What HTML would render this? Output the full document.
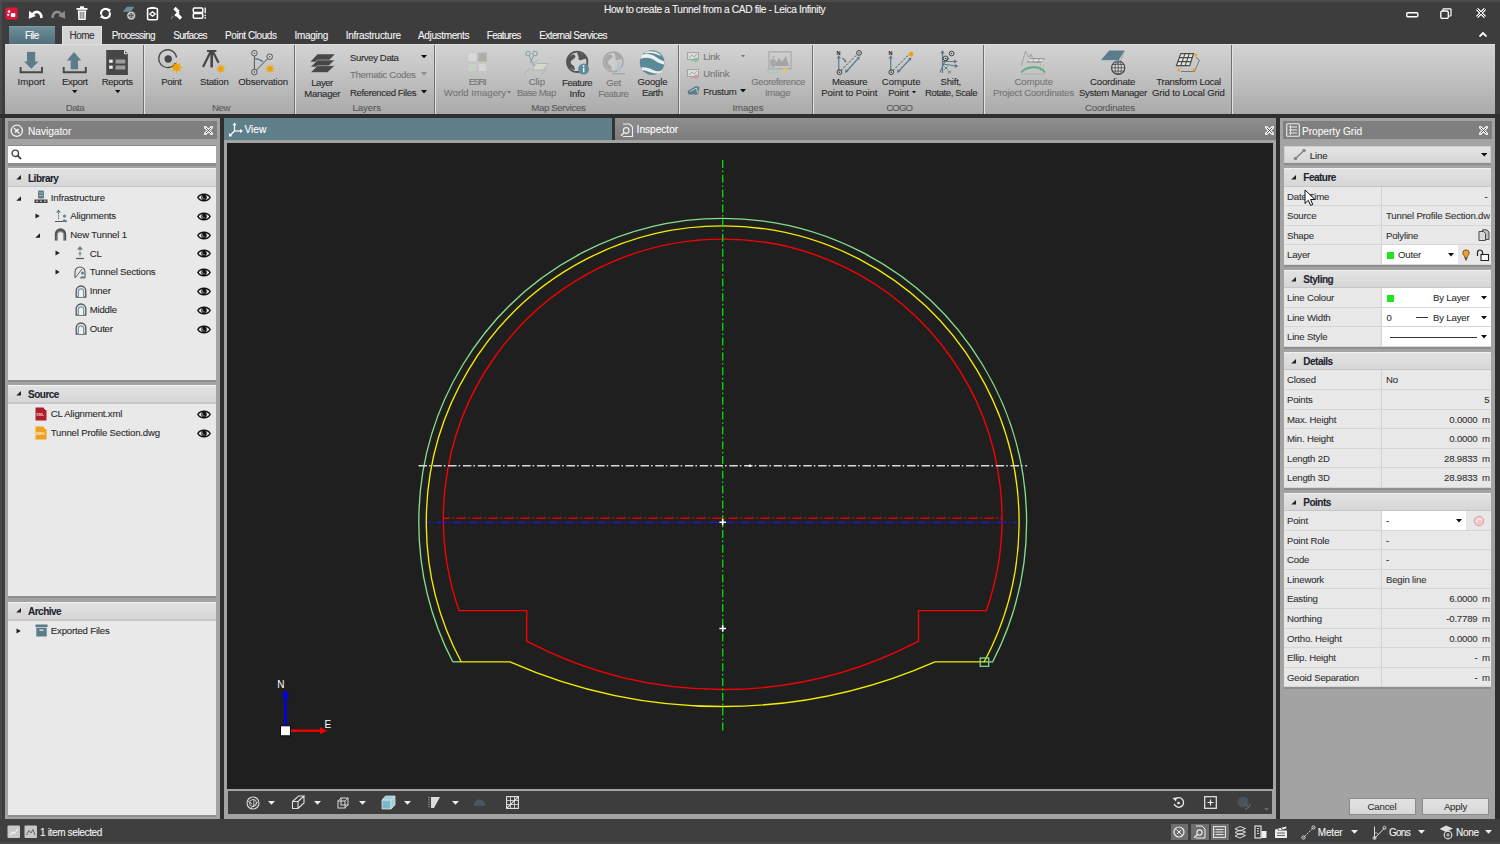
<!DOCTYPE html>
<html><head><meta charset="utf-8">
<style>
*{margin:0;padding:0;box-sizing:border-box}
html,body{width:1500px;height:844px;overflow:hidden;background:#3d3d3d;font-family:"Liberation Sans",sans-serif;font-size:9.6px;color:#333;position:relative}
.a{position:absolute;display:block}
.t{position:absolute;white-space:nowrap;-webkit-text-stroke:0.1px currentColor}
</style></head><body>

<div class="a" style="left:0px;top:0px;width:1500px;height:844px;background:#3d3d3d;"></div>
<div class="a" style="left:0px;top:0px;width:1500px;height:2px;background:#4a4a4a;"></div>
<div class="a" style="left:0px;top:0px;width:2px;height:844px;background:#4a4a4a;"></div>
<svg class="a" style="left:5px;top:7px;" width="13" height="13" viewBox="0 0 13 13"><rect x="0.5" y="0.5" width="12" height="12" rx="2" fill="#e3163a"/><circle cx="4" cy="4.5" r="1.3" fill="#fff"/><circle cx="3.2" cy="7.8" r="1.1" fill="#fff"/><rect x="5.8" y="6" width="4.5" height="4" rx="1" fill="#fff"/></svg>
<svg class="a" style="left:28px;top:7px;" width="15" height="13" viewBox="0 0 15 13"><path d="M4.5 7.5C7 4 11.5 3.8 13.2 8.5L13.5 11" stroke="#fff" stroke-width="2.6" fill="none"/><path d="M0.8 11.8L1.2 3.8L7.8 9Z" fill="#fff"/></svg>
<svg class="a" style="left:51px;top:7px;" width="15" height="13" viewBox="0 0 15 13"><path d="M10.5 7.5C8 4 3.5 3.8 1.8 8.5L1.5 11" stroke="#8c8c8c" stroke-width="2.6" fill="none"/><path d="M14.2 11.8L13.8 3.8L7.2 9Z" fill="#8c8c8c"/></svg>
<svg class="a" style="left:76px;top:6px;" width="12" height="15" viewBox="0 0 12 15"><rect x="0.5" y="2" width="11" height="1.8" fill="#fff"/><rect x="4" y="0.3" width="4" height="1.8" fill="#fff"/><path d="M1.8 4.6H10.2L9.7 14H2.3Z" fill="#fff"/><path d="M4.2 5.8V12.8M6 5.8V12.8M7.8 5.8V12.8" stroke="#555" stroke-width="0.9"/></svg>
<svg class="a" style="left:99px;top:7px;" width="13" height="13" viewBox="0 0 13 13"><path d="M2.3 7.5A4.3 4.3 0 0 1 9.8 3.6" stroke="#fff" stroke-width="2.1" fill="none"/><path d="M10.7 5.5A4.3 4.3 0 0 1 3.2 9.4" stroke="#fff" stroke-width="2.1" fill="none"/><path d="M7.6 1.2L11.8 2.2L10.3 6.2Z" fill="#fff"/><path d="M5.4 11.8L1.2 10.8L2.7 6.8Z" fill="#fff"/></svg>
<svg class="a" style="left:122px;top:6px;" width="15" height="15" viewBox="0 0 15 15"><path d="M0.8 5.8L4.8 0.8H12.5L8.5 5.8Z" fill="#6a8f9a"/><circle cx="9.2" cy="9.6" r="4.3" fill="#d8d8d8" stroke="#3d3d3d" stroke-width="0.6"/><path d="M6.5 9.6H12M9.2 7V12.2" stroke="#555" stroke-width="1"/><circle cx="9.2" cy="9.6" r="2.2" fill="none" stroke="#555" stroke-width="0.8"/></svg>
<svg class="a" style="left:146px;top:6px;" width="13" height="15" viewBox="0 0 13 15"><rect x="1.6" y="2.2" width="9.8" height="11.6" rx="1.3" fill="none" stroke="#fff" stroke-width="1.6"/><path d="M4 2.6C4 0.8 9 0.8 9 2.6" fill="#fff" stroke="#fff" stroke-width="1.2"/><path d="M3.8 8L6.5 5.8L9.2 8L6.5 10.2Z" fill="none" stroke="#fff" stroke-width="1.3"/></svg>
<svg class="a" style="left:169px;top:6px;" width="15" height="15" viewBox="0 0 15 15"><path d="M5.5 2L9.5 6M8 8.5L12 12.5" stroke="#fff" stroke-width="3.2"/><path d="M6.2 9.8L9.8 6.2" stroke="#fff" stroke-width="2.4"/><path d="M4.5 9.8L2 12.8" stroke="#6a8f9a" stroke-width="1.1"/></svg>
<svg class="a" style="left:192px;top:7px;" width="15" height="12" viewBox="0 0 15 12"><rect x="1.3" y="0.9" width="9.5" height="4.6" rx="1" fill="none" stroke="#fff" stroke-width="1.5"/><rect x="1.3" y="6.6" width="9.5" height="4.6" rx="1" fill="none" stroke="#fff" stroke-width="1.5"/><path d="M13.2 0.5V6.5" stroke="#fff" stroke-width="1.3"/><circle cx="13.2" cy="8.6" r="0.8" fill="#fff"/><circle cx="13.2" cy="10.9" r="0.8" fill="#fff"/></svg>
<div class="t" style="top:4.70px;font-size:10.2px;line-height:10.2px;color:#f2f2f2;letter-spacing:-0.382px;left:604.0px;">How to create a Tunnel from a CAD file - Leica Infinity</div>
<svg class="a" style="left:1406px;top:12px;" width="13" height="6" viewBox="0 0 13 6"><rect x="0.8" y="0.8" width="11" height="4" rx="1" fill="none" stroke="#fff" stroke-width="1.4"/></svg>
<svg class="a" style="left:1440px;top:8px;" width="12" height="11" viewBox="0 0 12 11"><rect x="0.8" y="3" width="7.5" height="7.5" rx="1.5" fill="none" stroke="#fff" stroke-width="1.3"/><path d="M3 3V1.2C3 1 3.2 0.8 3.5 0.8H10.5C10.8 0.8 11 1 11 1.3V7.5C11 7.8 10.8 8 10.5 8H8.3" fill="none" stroke="#fff" stroke-width="1.2"/></svg>
<svg class="a" style="left:1476px;top:8px;" width="10" height="10" viewBox="0 0 10 10"><path d="M1 1L9 9M9 1L1 9" stroke="#fff" stroke-width="3"/><path d="M1 1L9 9M9 1L1 9" stroke="#3d3d3d" stroke-width="1"/></svg>
<svg class="a" style="left:1479px;top:32px;" width="8" height="5" viewBox="0 0 8 5"><path d="M0.5 4.5L4 1L7.5 4.5" stroke="#fff" stroke-width="1.8" fill="none"/></svg>
<div class="a" style="left:9px;top:26px;width:46px;height:18px;background:linear-gradient(#6e8e99,#4f6f7b);border-top:1px solid #7d9ca6"></div>
<div class="t" style="top:30.80px;font-size:10px;line-height:10px;color:#fff;letter-spacing:-0.62px;left:25.0px;">File</div>
<div class="a" style="left:62px;top:26px;width:40px;height:19px;background:#d4d4d4;border:1px solid #e2e2e2;border-bottom:0"></div>
<div class="t" style="top:30.80px;font-size:10px;line-height:10px;color:#333;letter-spacing:-0.56px;left:69.5px;">Home</div>
<div class="t" style="top:30.80px;font-size:10px;line-height:10px;color:#f4f4f4;letter-spacing:-0.636px;left:111.75px;">Processing</div>
<div class="t" style="top:30.80px;font-size:10px;line-height:10px;color:#f4f4f4;letter-spacing:-0.744px;left:173.25px;">Surfaces</div>
<div class="t" style="top:30.80px;font-size:10px;line-height:10px;color:#f4f4f4;letter-spacing:-0.427px;left:225.0px;">Point Clouds</div>
<div class="t" style="top:30.80px;font-size:10px;line-height:10px;color:#f4f4f4;letter-spacing:-0.305px;left:294.5px;">Imaging</div>
<div class="t" style="top:30.80px;font-size:10px;line-height:10px;color:#f4f4f4;letter-spacing:-0.282px;left:345.75px;">Infrastructure</div>
<div class="t" style="top:30.80px;font-size:10px;line-height:10px;color:#f4f4f4;letter-spacing:-0.352px;left:418.0px;">Adjustments</div>
<div class="t" style="top:30.80px;font-size:10px;line-height:10px;color:#f4f4f4;letter-spacing:-0.709px;left:486.75px;">Features</div>
<div class="t" style="top:30.80px;font-size:10px;line-height:10px;color:#f4f4f4;letter-spacing:-0.598px;left:539.25px;">External Services</div>
<div class="a" style="left:5px;top:44px;width:1490px;height:70px;background:linear-gradient(#d2d2d2 0%,#c4c4c4 40%,#aaaaaa 100%);border-top:1px solid #dedede"></div>
<div class="a" style="left:144px;top:45px;width:1px;height:69px;background:#e4e4e4;"></div>
<div class="a" style="left:143px;top:45px;width:1px;height:69px;background:#707070;"></div>
<div class="a" style="left:295px;top:45px;width:1px;height:69px;background:#e4e4e4;"></div>
<div class="a" style="left:294px;top:45px;width:1px;height:69px;background:#707070;"></div>
<div class="a" style="left:435px;top:45px;width:1px;height:69px;background:#e4e4e4;"></div>
<div class="a" style="left:434px;top:45px;width:1px;height:69px;background:#707070;"></div>
<div class="a" style="left:679px;top:45px;width:1px;height:69px;background:#e4e4e4;"></div>
<div class="a" style="left:678px;top:45px;width:1px;height:69px;background:#707070;"></div>
<div class="a" style="left:812.5px;top:45px;width:1px;height:69px;background:#e4e4e4;"></div>
<div class="a" style="left:811.5px;top:45px;width:1px;height:69px;background:#707070;"></div>
<div class="a" style="left:984px;top:45px;width:1px;height:69px;background:#e4e4e4;"></div>
<div class="a" style="left:983px;top:45px;width:1px;height:69px;background:#707070;"></div>
<div class="a" style="left:1232px;top:45px;width:1px;height:69px;background:#e4e4e4;"></div>
<div class="a" style="left:1231px;top:45px;width:1px;height:69px;background:#707070;"></div>
<div class="t" style="top:77.20px;font-size:9.6px;line-height:9.6px;color:#2a2a2a;letter-spacing:0.059px;left:17.5px;">Import</div>
<div class="t" style="top:77.20px;font-size:9.6px;line-height:9.6px;color:#2a2a2a;letter-spacing:-0.349px;left:62.0px;">Export</div>
<svg class="a" style="left:72.25px;top:90.4px;" width="5.5" height="3.2" viewBox="0 0 5.5 3.2"><path d="M0 0H5.5L2.75 3.2Z" fill="#111"/></svg>
<div class="t" style="top:77.20px;font-size:9.6px;line-height:9.6px;color:#2a2a2a;letter-spacing:-0.393px;left:101.75px;">Reports</div>
<svg class="a" style="left:114.75px;top:90.4px;" width="5.5" height="3.2" viewBox="0 0 5.5 3.2"><path d="M0 0H5.5L2.75 3.2Z" fill="#111"/></svg>
<div class="t" style="top:103.00px;font-size:9.6px;line-height:9.6px;color:#585858;letter-spacing:-0.512px;left:65.75px;">Data</div>
<div class="t" style="top:77.20px;font-size:9.6px;line-height:9.6px;color:#2a2a2a;letter-spacing:-0.345px;left:161.25px;">Point</div>
<div class="t" style="top:77.20px;font-size:9.6px;line-height:9.6px;color:#2a2a2a;letter-spacing:-0.189px;left:200.0px;">Station</div>
<div class="t" style="top:77.20px;font-size:9.6px;line-height:9.6px;color:#2a2a2a;letter-spacing:-0.201px;left:238.25px;">Observation</div>
<div class="t" style="top:103.00px;font-size:9.6px;line-height:9.6px;color:#585858;letter-spacing:-0.364px;left:212.0px;">New</div>
<div class="t" style="top:78.40px;font-size:9.6px;line-height:9.6px;color:#2a2a2a;letter-spacing:-0.502px;left:311.25px;">Layer</div>
<div class="t" style="top:89.20px;font-size:9.6px;line-height:9.6px;color:#2a2a2a;letter-spacing:-0.274px;left:304.25px;">Manager</div>
<div class="t" style="top:52.50px;font-size:9.6px;line-height:9.6px;color:#2a2a2a;letter-spacing:-0.383px;left:350.0px;">Survey Data</div>
<svg class="a" style="left:420.5px;top:54.75px;" width="6" height="3.5" viewBox="0 0 6 3.5"><path d="M0 0H6L3.0 3.5Z" fill="#111"/></svg>
<div class="t" style="top:70.00px;font-size:9.6px;line-height:9.6px;color:#747474;letter-spacing:-0.315px;left:350.0px;">Thematic Codes</div>
<svg class="a" style="left:420.5px;top:72.25px;" width="6" height="3.5" viewBox="0 0 6 3.5"><path d="M0 0H6L3.0 3.5Z" fill="#8a8a8a"/></svg>
<div class="t" style="top:88.00px;font-size:9.6px;line-height:9.6px;color:#2a2a2a;letter-spacing:-0.404px;left:350.0px;">Referenced Files</div>
<svg class="a" style="left:420.5px;top:90.25px;" width="6" height="3.5" viewBox="0 0 6 3.5"><path d="M0 0H6L3.0 3.5Z" fill="#111"/></svg>
<div class="t" style="top:103.00px;font-size:9.6px;line-height:9.6px;color:#585858;letter-spacing:-0.062px;left:352.5px;">Layers</div>
<div class="t" style="top:77.20px;font-size:9.6px;line-height:9.6px;color:#747474;letter-spacing:-1.469px;left:468.75px;">ESRI</div>
<div class="t" style="top:88.00px;font-size:9.6px;line-height:9.6px;color:#747474;letter-spacing:0.001px;left:443.75px;">World Imagery</div>
<svg class="a" style="left:506.5px;top:91.25px;" width="4" height="2.5" viewBox="0 0 4 2.5"><path d="M0 0H4L2.0 2.5Z" fill="#747474"/></svg>
<div class="t" style="top:77.20px;font-size:9.6px;line-height:9.6px;color:#747474;letter-spacing:-0.097px;left:528.75px;">Clip</div>
<div class="t" style="top:88.00px;font-size:9.6px;line-height:9.6px;color:#747474;letter-spacing:-0.567px;left:517.0px;">Base Map</div>
<div class="t" style="top:78.20px;font-size:9.6px;line-height:9.6px;color:#2a2a2a;letter-spacing:-0.43px;left:562.0px;">Feature</div>
<div class="t" style="top:89.00px;font-size:9.6px;line-height:9.6px;color:#2a2a2a;letter-spacing:-0.171px;left:569.5px;">Info</div>
<div class="t" style="top:78.20px;font-size:9.6px;line-height:9.6px;color:#747474;letter-spacing:-0.238px;left:606.25px;">Get</div>
<div class="t" style="top:89.00px;font-size:9.6px;line-height:9.6px;color:#747474;letter-spacing:-0.43px;left:598.25px;">Feature</div>
<div class="t" style="top:77.20px;font-size:9.6px;line-height:9.6px;color:#2a2a2a;letter-spacing:-0.192px;left:637.5px;">Google</div>
<div class="t" style="top:88.00px;font-size:9.6px;line-height:9.6px;color:#2a2a2a;letter-spacing:-0.486px;left:642.0px;">Earth</div>
<div class="t" style="top:103.00px;font-size:9.6px;line-height:9.6px;color:#585858;letter-spacing:-0.332px;left:531.25px;">Map Services</div>
<div class="t" style="top:52.20px;font-size:9.6px;line-height:9.6px;color:#747474;letter-spacing:-0.292px;left:703.25px;">Link</div>
<svg class="a" style="left:740.5px;top:54.75px;" width="4" height="2.5" viewBox="0 0 4 2.5"><path d="M0 0H4L2.0 2.5Z" fill="#747474"/></svg>
<div class="t" style="top:69.20px;font-size:9.6px;line-height:9.6px;color:#747474;letter-spacing:-0.09px;left:703.25px;">Unlink</div>
<div class="t" style="top:86.70px;font-size:9.6px;line-height:9.6px;color:#2a2a2a;letter-spacing:-0.284px;left:703.25px;">Frustum</div>
<svg class="a" style="left:740.0px;top:88.75px;" width="6" height="3.5" viewBox="0 0 6 3.5"><path d="M0 0H6L3.0 3.5Z" fill="#111"/></svg>
<div class="t" style="top:77.20px;font-size:9.6px;line-height:9.6px;color:#747474;letter-spacing:-0.405px;left:751.25px;">Georeference</div>
<div class="t" style="top:88.00px;font-size:9.6px;line-height:9.6px;color:#747474;letter-spacing:-0.295px;left:765.0px;">Image</div>
<div class="t" style="top:103.00px;font-size:9.6px;line-height:9.6px;color:#585858;letter-spacing:-0.096px;left:732.5px;">Images</div>
<div class="t" style="top:77.20px;font-size:9.6px;line-height:9.6px;color:#2a2a2a;letter-spacing:-0.309px;left:832.0px;">Measure</div>
<div class="t" style="top:88.00px;font-size:9.6px;line-height:9.6px;color:#2a2a2a;letter-spacing:-0.065px;left:821.25px;">Point to Point</div>
<div class="t" style="top:77.20px;font-size:9.6px;line-height:9.6px;color:#2a2a2a;letter-spacing:-0.034px;left:881.75px;">Compute</div>
<div class="t" style="top:88.00px;font-size:9.6px;line-height:9.6px;color:#2a2a2a;letter-spacing:-0.282px;left:888.25px;">Point</div>
<svg class="a" style="left:911.5px;top:91.05px;" width="4" height="2.5" viewBox="0 0 4 2.5"><path d="M0 0H4L2.0 2.5Z" fill="#111"/></svg>
<div class="t" style="top:77.20px;font-size:9.6px;line-height:9.6px;color:#2a2a2a;letter-spacing:-0.226px;left:940.5px;">Shift,</div>
<div class="t" style="top:88.00px;font-size:9.6px;line-height:9.6px;color:#2a2a2a;letter-spacing:-0.427px;left:925.0px;">Rotate, Scale</div>
<div class="t" style="top:103.00px;font-size:9.6px;line-height:9.6px;color:#585858;letter-spacing:-0.863px;left:886.25px;">COGO</div>
<div class="t" style="top:77.20px;font-size:9.6px;line-height:9.6px;color:#747474;letter-spacing:-0.076px;left:1014.5px;">Compute</div>
<div class="t" style="top:88.00px;font-size:9.6px;line-height:9.6px;color:#747474;letter-spacing:-0.17px;left:993.0px;">Project Coordinates</div>
<div class="t" style="top:77.20px;font-size:9.6px;line-height:9.6px;color:#2a2a2a;letter-spacing:-0.174px;left:1090.0px;">Coordinate</div>
<div class="t" style="top:88.00px;font-size:9.6px;line-height:9.6px;color:#2a2a2a;letter-spacing:-0.336px;left:1079.0px;">System Manager</div>
<div class="t" style="top:77.20px;font-size:9.6px;line-height:9.6px;color:#2a2a2a;letter-spacing:-0.286px;left:1156.25px;">Transform Local</div>
<div class="t" style="top:88.00px;font-size:9.6px;line-height:9.6px;color:#2a2a2a;letter-spacing:-0.131px;left:1152.0px;">Grid to Local Grid</div>
<div class="t" style="top:103.00px;font-size:9.6px;line-height:9.6px;color:#585858;letter-spacing:-0.176px;left:1085.0px;">Coordinates</div>
<svg class="a" style="left:18px;top:50px;" width="26" height="25" viewBox="0 0 26 25"><rect x="9" y="1.9" width="8.2" height="10" fill="#5b7c88"/><path d="M6 11.5H20.6L13.2 18.8Z" fill="#5b7c88"/><path d="M2.6 17V22.3H24V17" fill="none" stroke="#474747" stroke-width="1.9"/></svg>
<svg class="a" style="left:62px;top:50px;" width="26" height="25" viewBox="0 0 26 25"><rect x="8.7" y="10" width="7.3" height="9.3" fill="#5b7c88"/><path d="M4.8 10.6H19.2L12 1.9Z" fill="#5b7c88"/><path d="M1.7 17V22.3H23.8V17" fill="none" stroke="#474747" stroke-width="1.9"/></svg>
<svg class="a" style="left:106px;top:50px;" width="22" height="25" viewBox="0 0 22 25"><path d="M0.2 0H18L21.9 4V24.9H0.2Z" fill="#474747"/><path d="M18.5 0.8V3.8H21.2" fill="none" stroke="#eee" stroke-width="1"/><rect x="3.2" y="9.6" width="3.5" height="3.2" fill="#eee"/><rect x="3.2" y="15.6" width="3.5" height="3.2" fill="#eee"/><rect x="9.5" y="9.5" width="9.8" height="4" fill="#9c9c9c"/><rect x="9.5" y="15.5" width="9.8" height="4" fill="#9c9c9c"/></svg>
<svg class="a" style="left:158px;top:49px;" width="26" height="27" viewBox="0 0 26 27"><path d="M17.5 14A8.9 8.9 0 1 1 18.5 8.5" fill="none" stroke="#474747" stroke-width="1.4"/><circle cx="10.2" cy="10" r="3.7" fill="#474747"/><polygon points="18.60,12.10 19.68,15.78 23.05,13.95 21.22,17.32 24.90,18.40 21.22,19.48 23.05,22.85 19.68,21.02 18.60,24.70 17.52,21.02 14.15,22.85 15.98,19.48 12.30,18.40 15.98,17.32 14.15,13.95 17.52,15.78" fill="#f0a000"/></svg>
<svg class="a" style="left:200px;top:49px;" width="28" height="27" viewBox="0 0 28 27"><rect x="7" y="1" width="9.4" height="2" fill="#474747"/><path d="M11.7 2.5V18.4" stroke="#474747" stroke-width="2.6"/><path d="M10.5 3L3 17.9" stroke="#474747" stroke-width="2.2"/><path d="M13 3L18.6 13.7" stroke="#474747" stroke-width="2.2"/><polygon points="20.80,14.80 21.66,17.72 24.34,16.26 22.88,18.94 25.80,19.80 22.88,20.66 24.34,23.34 21.66,21.88 20.80,24.80 19.94,21.88 17.26,23.34 18.72,20.66 15.80,19.80 18.72,18.94 17.26,16.26 19.94,17.72" fill="#f0a000"/></svg>
<svg class="a" style="left:248px;top:49px;" width="30" height="27" viewBox="0 0 30 27"><path d="M6.4 4.2V23.1M6.4 23.1L21.7 7.7" stroke="#555" stroke-width="1"/><path d="M6.4 9.5Q12 10 15 12.8" fill="none" stroke="#5b7c88" stroke-width="1.3"/><circle cx="6.4" cy="4.2" r="2.8" fill="#d0d0d0" stroke="#555" stroke-width="1"/><circle cx="6.4" cy="4.2" r="0.8" fill="#555"/><circle cx="21.7" cy="7.7" r="2.8" fill="#d0d0d0" stroke="#555" stroke-width="1"/><circle cx="21.7" cy="7.7" r="0.8" fill="#555"/><circle cx="6.4" cy="23.1" r="2.8" fill="#c8c8c8" stroke="#555" stroke-width="1"/><circle cx="6.4" cy="23.1" r="0.8" fill="#555"/><polygon points="22.00,14.80 22.86,17.72 25.54,16.26 24.08,18.94 27.00,19.80 24.08,20.66 25.54,23.34 22.86,21.88 22.00,24.80 21.14,21.88 18.46,23.34 19.92,20.66 17.00,19.80 19.92,18.94 18.46,16.26 21.14,17.72" fill="#f0a000"/></svg>
<svg class="a" style="left:310px;top:53px;" width="26" height="21" viewBox="0 0 26 21"><path d="M7.5 1.3H24.7L17.5 8.8H0.5Z" fill="#474747"/><path d="M7.5 7H24.7L17.5 14H0.5Z" fill="#474747" stroke="#c8c8c8" stroke-width="0.6"/><path d="M7.5 12.7H24.7L17.5 19.5H0.5Z" fill="#474747" stroke="#c4c4c4" stroke-width="0.6"/></svg>
<svg class="a" style="left:467px;top:52px;opacity:0.85" width="21" height="21" viewBox="0 0 21 21"><rect x="1" y="0.9" width="8.5" height="8.4" fill="#dcdcdc" stroke="#c4c4c4" stroke-width="0.6"/><rect x="11.2" y="0.9" width="8.5" height="8.4" fill="#a8aca0" stroke="#b0b0b0" stroke-width="0.6"/><rect x="1" y="11.2" width="8.5" height="8.4" fill="#c8d4c8" stroke="#c0c0c0" stroke-width="0.6"/><rect x="11.2" y="11.2" width="8.5" height="8.4" fill="#d8d8d8" stroke="#c0c0c0" stroke-width="0.6"/></svg>
<svg class="a" style="left:522px;top:49px;" width="28" height="27" viewBox="0 0 28 27"><circle cx="6" cy="4.5" r="2.2" fill="none" stroke="#8aa6ae" stroke-width="1.1"/><circle cx="13" cy="4.5" r="2.2" fill="none" stroke="#8aa6ae" stroke-width="1.1"/><path d="M7 6.5L12 17M12 6.5L8 14" stroke="#8aa6ae" stroke-width="1.1"/><path d="M10 21L14.5 14.5H26L21 21Z" fill="#d4dcc8" stroke="#aab4b4" stroke-width="0.9"/><path d="M2 25L8 19M20 25L25 19M11 15L17 10" stroke="#a8b0b0" stroke-width="0.9"/></svg>
<svg class="a" style="left:565px;top:50px;" width="26" height="26" viewBox="0 0 26 26"><circle cx="12.2" cy="11.8" r="10.2" fill="#cfcfcf" stroke="#555" stroke-width="1.8"/><path d="M3 8C5 5 8 4 9.5 4.5L10.5 7C9 9 7.5 9.5 6 11C5 13 7 15 9 16L10 20C7 20 3 17 2.5 13Z" fill="#555"/><path d="M12 2.5C16 2.5 20 5 21.5 8.5L17.5 9.5C15 11 13 10 13.5 8C14 6 12.5 5 12 2.5Z" fill="#555"/><circle cx="18.6" cy="19.1" r="5.5" fill="#5b8a9a"/><rect x="17.9" y="17.8" width="1.5" height="4.5" fill="#f4f4f4"/><circle cx="18.6" cy="16" r="0.9" fill="#f4f4f4"/></svg>
<svg class="a" style="left:602px;top:50px;" width="24" height="26" viewBox="0 0 24 26"><circle cx="11.2" cy="11.8" r="9.8" fill="#cdcdcd" stroke="#a8a8a8" stroke-width="1.6"/><path d="M3 8C5 5 8 4 9.5 4.5L10.5 7C9 9 7.5 9.5 6 11C5 13 7 15 9 16L10 20C7 20 3 17 2.5 13Z" fill="#a8a8a8"/><path d="M12 2.5C16 2.5 20 5 21 8.5L17 9.5C15 11 13 10 13.5 8C14 6 12.5 5 12 2.5Z" fill="#a8a8a8"/><rect x="15" y="11.5" width="3.4" height="6.5" fill="#b4c4ca"/><path d="M12.5 17.5H21L16.7 22Z" fill="#b4c4ca"/><path d="M10.5 23.8H23" stroke="#a4a4a4" stroke-width="1.4"/></svg>
<svg class="a" style="left:639px;top:49px;" width="27" height="27" viewBox="0 0 27 27"><circle cx="13.1" cy="13.5" r="12.3" fill="#5a8a98"/><path d="M2.5 6.5C7 4 13 5 17 8C20 10 23 12 25.3 12.5L25 15.5C21 15 18 13 15 11C11 8.5 6 8 1.5 10Z" fill="#eeeeee"/><path d="M6 3.2C10 1.5 16 2 20 4.5L22.5 7C19 6 16 4.5 12 4C10 3.8 8 4 6 4.5Z" fill="#eeeeee"/><path d="M2.5 18.5C6 18 10 19 14 21C17 22.5 21 23 23.5 21L22 23.5C19 25 15 24.5 12 23.5C8 22 5 21 3 21Z" fill="#eeeeee"/></svg>
<svg class="a" style="left:687px;top:52px;" width="13" height="10" viewBox="0 0 13 10"><rect x="0.5" y="0.5" width="11" height="7" fill="#dadada" stroke="#9a9a9a" stroke-width="0.8"/><path d="M2 6L5 3L7 5L10 2" stroke="#9a9a9a" stroke-width="0.8" fill="none"/><circle cx="9" cy="8" r="1.8" fill="none" stroke="#6cbf8a" stroke-width="1"/><circle cx="6.5" cy="9.5" r="1.8" fill="none" stroke="#6cbf8a" stroke-width="1"/></svg>
<svg class="a" style="left:687px;top:69px;" width="13" height="10" viewBox="0 0 13 10"><rect x="0.5" y="0.5" width="11" height="7" fill="#dadada" stroke="#9a9a9a" stroke-width="0.8"/><path d="M2 6L5 3L7 5L10 2" stroke="#9a9a9a" stroke-width="0.8" fill="none"/><circle cx="9" cy="8" r="1.8" fill="none" stroke="#d88a9a" stroke-width="1"/><circle cx="6.5" cy="9.5" r="1.8" fill="none" stroke="#d88a9a" stroke-width="1"/></svg>
<svg class="a" style="left:687px;top:85px;" width="13" height="10" viewBox="0 0 13 10"><path d="M0.5 6L9 1L12.5 2L11 9.5H1.5Z" fill="#5b7c88"/><path d="M3 6.5L9.5 3L10.5 8" stroke="#e0e0e0" stroke-width="0.8" fill="none"/></svg>
<svg class="a" style="left:765px;top:51px;" width="27" height="24" viewBox="0 0 27 24"><rect x="4" y="0.8" width="22" height="17" fill="none" stroke="#a8a8a8" stroke-width="1.2"/><path d="M9 15L14 7L17 11L21 5L24 15Z" fill="#a4a4a4"/><circle cx="8.5" cy="6" r="1.5" fill="#a8b8c0"/><path d="M5 11A3 3 0 0 1 11 11C11 14 8 17 8 17C8 17 5 14 5 11Z" fill="#a8a8a8"/><ellipse cx="8" cy="19.5" rx="6" ry="2.5" fill="none" stroke="#a8c0c0" stroke-width="1"/><polygon points="20.00,15.40 20.62,17.50 22.55,16.45 21.50,18.38 23.60,19.00 21.50,19.62 22.55,21.55 20.62,20.50 20.00,22.60 19.38,20.50 17.45,21.55 18.50,19.62 16.40,19.00 18.50,18.38 17.45,16.45 19.38,17.50" fill="#e8c070"/></svg>
<svg class="a" style="left:834px;top:49px;" width="28" height="27" viewBox="0 0 28 27"><text x="2.5" y="5.5" font-size="5.5" font-weight="bold" fill="#222" font-family="Liberation Sans">N</text><path d="M4.8 22V8" stroke="#5b7c88" stroke-width="1.2"/><path d="M2.6 9.5L4.8 6L7 9.5Z" fill="#5b7c88"/><path d="M8.5 9L11.5 12" stroke="#5b7c88" stroke-width="1.4"/><path d="M10 13L12.5 13.5L12 11Z" fill="#5b7c88"/><path d="M7 21.5L23 5.5" stroke="#444" stroke-width="1" stroke-dasharray="2.2 1.6"/><path d="M12.5 22.5L24.5 9" stroke="#5b7c88" stroke-width="1.2"/><path d="M11 24L11.5 20L14.5 22.5Z" fill="#5b7c88"/><path d="M26 7.5L22.5 8.5L25.3 11Z" fill="#5b7c88"/><circle cx="5.4" cy="23.2" r="2.4" fill="none" stroke="#333" stroke-width="0.9"/><circle cx="5.4" cy="23.2" r="0.7" fill="#333"/><circle cx="25" cy="3.9" r="2.4" fill="none" stroke="#333" stroke-width="0.9"/><circle cx="25" cy="3.9" r="0.7" fill="#333"/></svg>
<svg class="a" style="left:886px;top:49px;" width="28" height="27" viewBox="0 0 28 27"><text x="2.5" y="5.5" font-size="5.5" font-weight="bold" fill="#222" font-family="Liberation Sans">N</text><path d="M4.7 22V8" stroke="#5b7c88" stroke-width="1.2"/><path d="M2.5 9.5L4.7 6L6.9 9.5Z" fill="#5b7c88"/><path d="M7 21.5L23 5.5" stroke="#444" stroke-width="1" stroke-dasharray="2.2 1.6"/><path d="M12.5 22.5L24 10" stroke="#5b7c88" stroke-width="1.2"/><path d="M11 24L11.5 20L14.5 22.5Z" fill="#5b7c88"/><path d="M25.5 8.5L22 9.5L24.8 12Z" fill="#5b7c88"/><circle cx="5.3" cy="23.2" r="2.4" fill="none" stroke="#333" stroke-width="0.9"/><circle cx="5.3" cy="23.2" r="0.7" fill="#333"/><circle cx="25.1" cy="5.1" r="2.3" fill="#f0a000"/></svg>
<svg class="a" style="left:937px;top:49px;" width="28" height="27" viewBox="0 0 28 27"><path d="M5.5 24V3" stroke="#5b7c88" stroke-width="1.2"/><path d="M3.3 4.5L5.5 1L7.7 4.5Z" fill="#5b7c88"/><path d="M3 23.5L7.5 13L12 9" stroke="#5b7c88" stroke-width="1.1" fill="none"/><path d="M6 12.5H18M6 15L19 17" stroke="#5b7c88" stroke-width="1.1"/><path d="M17 10.5L20.5 12.5L17 14.5Z" fill="#5b7c88"/><path d="M18 15L21.5 17.2L17.5 19Z" fill="#5b7c88"/><path d="M7.5 17.5L10.5 20.5M10.5 17.5L7.5 20.5M11 21.5L14 24.5M14 21.5L11 24.5" stroke="#5b7c88" stroke-width="1"/><circle cx="8.6" cy="9.4" r="2.4" fill="none" stroke="#333" stroke-width="0.9"/><circle cx="8.6" cy="9.4" r="0.7" fill="#333"/><circle cx="14.6" cy="4.5" r="2.4" fill="none" stroke="#333" stroke-width="0.9"/><circle cx="14.6" cy="4.5" r="0.7" fill="#333"/></svg>
<svg class="a" style="left:1020px;top:49px;" width="28" height="27" viewBox="0 0 28 27"><path d="M1.3 17L5.5 2L9 8.5L11 5L12.5 9.5" fill="none" stroke="#9c9c9c" stroke-width="0.9"/><path d="M6.4 13.5L10.2 9H25.4L21 14Z" fill="#9a9a9a"/><path d="M9.5 10.2H13.8L12.3 12.2H8ZM14.8 10.2H19L17.5 12.2H13.3ZM20 10.2H23.5L22 12.2H18.5Z" fill="#e8e8e8"/><path d="M20.5 15V22M23.5 15V21" stroke="#a4a4a4" stroke-width="0.8" stroke-dasharray="1 1"/><path d="M1.3 23.5C6 17 20 16 25 23.5" fill="none" stroke="#5cb080" stroke-width="1.8"/><path d="M1 25H25.5" stroke="#b0b0b0" stroke-width="1"/></svg>
<svg class="a" style="left:1099px;top:49px;" width="28" height="27" viewBox="0 0 28 27"><path d="M2 11L10.3 1.4H25.5L19.8 11Z" fill="#5b7c88"/><path d="M2 11H19.8L17 13H4Z" fill="#b8c4c8"/><path d="M25.5 1.4L21 14" stroke="#8aa0a8" stroke-width="0.8"/><circle cx="19.2" cy="18.8" r="6.6" fill="#dcdcdc" stroke="#444" stroke-width="1.2"/><path d="M12.6 18.8H25.8M19.2 12.2V25.4M13.5 15.5H24.9M13.5 22.1H24.9" stroke="#444" stroke-width="0.8"/><ellipse cx="19.2" cy="18.8" rx="3.2" ry="6.6" fill="none" stroke="#444" stroke-width="0.8"/><path d="M16.5 12L19 17L21.5 12Z" fill="#5b7c88"/></svg>
<svg class="a" style="left:1174px;top:51px;" width="28" height="24" viewBox="0 0 28 24"><path d="M6.8 2.6H19.5L15.7 14.6H2.4Z" fill="#e6e6e6" stroke="#4a4a4a" stroke-width="1.2"/><path d="M11 2.6L6.8 14.6M15.3 2.6L11.2 14.6M5.4 6.6H18.2M4 10.6H16.9" stroke="#4a4a4a" stroke-width="1.1"/><path d="M22 6.5L25.5 9L20.5 20.5H7" fill="none" stroke="#777" stroke-width="1"/><path d="M20 2.5L23.5 3.5L21.5 6.5Z" fill="#f0a000"/><path d="M4 17L3.5 20.5L7 19.5Z" fill="#f0a000"/><path d="M19 17L22.5 19L19 20.5Z" fill="#f0a000"/></svg>
<div class="a" style="left:5px;top:118px;width:215px;height:701px;background:#a3a3a3;"></div>
<div class="a" style="left:8px;top:121px;width:209px;height:18px;background:#7f7f7f;"></div>
<svg class="a" style="left:10px;top:124px;" width="14" height="14" viewBox="0 0 14 14"><circle cx="6.8" cy="6.8" r="5.6" fill="none" stroke="#f0f0f0" stroke-width="1.3"/><path d="M4 4L9.5 9.5M5 8.5L8.5 5" stroke="#f0f0f0" stroke-width="1.1"/><circle cx="6.8" cy="6.8" r="1.5" fill="#f0f0f0"/></svg>
<div class="t" style="top:126.60px;font-size:10.2px;line-height:10.2px;color:#f8f8f8;letter-spacing:-0.04px;left:28px;">Navigator</div>
<svg class="a" style="left:204px;top:125.5px;" width="9" height="9" viewBox="0 0 9 9"><path d="M1.3 1.3L7.7 7.7M7.7 1.3L1.3 7.7" stroke="#fafafa" stroke-width="2.8" stroke-linecap="round"/><path d="M1.6 1.6L7.4 7.4M7.4 1.6L1.6 7.4" stroke="#333" stroke-width="0.8"/></svg>
<div class="a" style="left:8px;top:145px;width:208px;height:18.5px;background:#ffffff;border-top:1px solid #8a8a8a;border-bottom:1px solid #8e8e8e"></div>
<svg class="a" style="left:11px;top:149px;" width="11" height="11" viewBox="0 0 11 11"><circle cx="4.3" cy="4.3" r="3.2" fill="none" stroke="#444" stroke-width="1.4"/><path d="M6.6 6.6L10 10" stroke="#444" stroke-width="1.8"/></svg>
<div class="a" style="left:8px;top:168px;width:208px;height:211.5px;background:#e9e9e9;"></div>
<div class="a" style="left:8px;top:168px;width:208px;height:17.5px;background:linear-gradient(#e2e2e2,#d6d6d6);border-top:1px solid #f2f2f2"></div>
<div class="a" style="left:8px;top:185.5px;width:208px;height:1.5px;background:#c6c6c6;"></div>
<svg class="a" style="left:16px;top:174.5px;" width="6" height="5" viewBox="0 0 6 5"><path d="M5 0V4.5H0.2Z" fill="#222"/></svg>
<div class="t" style="top:173.80px;font-size:10px;line-height:10px;color:#1e2430;letter-spacing:-0.5px;font-weight:bold;left:28px;">Library</div>
<div class="a" style="left:8px;top:384.5px;width:208px;height:211.0px;background:#e9e9e9;"></div>
<div class="a" style="left:8px;top:384.5px;width:208px;height:17.5px;background:linear-gradient(#e2e2e2,#d6d6d6);border-top:1px solid #f2f2f2"></div>
<div class="a" style="left:8px;top:402.0px;width:208px;height:1.5px;background:#c6c6c6;"></div>
<svg class="a" style="left:16px;top:391.0px;" width="6" height="5" viewBox="0 0 6 5"><path d="M5 0V4.5H0.2Z" fill="#222"/></svg>
<div class="t" style="top:390.30px;font-size:10px;line-height:10px;color:#1e2430;letter-spacing:-0.5px;font-weight:bold;left:28px;">Source</div>
<div class="a" style="left:8px;top:601.5px;width:208px;height:213.5px;background:#e9e9e9;"></div>
<div class="a" style="left:8px;top:601.5px;width:208px;height:17.5px;background:linear-gradient(#e2e2e2,#d6d6d6);border-top:1px solid #f2f2f2"></div>
<div class="a" style="left:8px;top:619.0px;width:208px;height:1.5px;background:#c6c6c6;"></div>
<svg class="a" style="left:16px;top:608.0px;" width="6" height="5" viewBox="0 0 6 5"><path d="M5 0V4.5H0.2Z" fill="#222"/></svg>
<div class="t" style="top:607.30px;font-size:10px;line-height:10px;color:#1e2430;letter-spacing:-0.5px;font-weight:bold;left:28px;">Archive</div>
<div class="a" style="left:8px;top:379.5px;width:208px;height:2px;background:#8e8e8e;"></div>
<div class="a" style="left:8px;top:595.5px;width:208px;height:2px;background:#8e8e8e;"></div>
<div class="a" style="left:8px;top:815px;width:208px;height:2px;background:#8e8e8e;"></div>
<div class="a" style="left:8px;top:163.5px;width:208px;height:2px;background:#8e8e8e;"></div>
<svg class="a" style="left:16px;top:195.8px;" width="6" height="5" viewBox="0 0 6 5"><path d="M5 0.2V4.8H0.2Z" fill="#222"/></svg>
<svg class="a" style="left:34px;top:190.3px;" width="14" height="14" viewBox="0 0 14 14"><rect x="4" y="0.5" width="6" height="8" rx="1.2" fill="#5b7c88"/><path d="M5 3H9M5 5.5H9" stroke="#b8c8cc" stroke-width="0.8"/><rect x="0.5" y="9.5" width="13" height="3.5" fill="#444"/><path d="M2 11.2H4M6 11.2H8M10 11.2H12" stroke="#ddd" stroke-width="1"/></svg>
<div class="t" style="top:192.50px;font-size:9.6px;line-height:9.6px;color:#2a2a2a;letter-spacing:-0.18px;left:50.8px;">Infrastructure</div>
<svg class="a" style="left:197px;top:193.3px;" width="14" height="9" viewBox="0 0 14 9"><path d="M0.9 4.5C3 0.2 11 0.2 13.1 4.5C11 8.8 3 8.8 0.9 4.5Z" fill="none" stroke="#111" stroke-width="1.5"/><circle cx="7" cy="4.5" r="2.7" fill="#111"/><path d="M6.3 3A1.6 1.6 0 1 0 8.2 5.4A1.4 1.4 0 0 1 6.3 3Z" fill="#e8e8e8"/></svg>
<svg class="a" style="left:35px;top:213px;" width="5" height="6" viewBox="0 0 5 6"><path d="M0.5 0.5L4.8 3L0.5 5.5Z" fill="#222"/></svg>
<svg class="a" style="left:54px;top:209px;" width="14" height="14" viewBox="0 0 14 14"><path d="M2 3.5L4.5 0.5L7 3.5Z" fill="#5b7c88"/><path d="M4.5 4V11" stroke="#555" stroke-width="1" stroke-dasharray="1.3 1"/><path d="M1 12.5H8" stroke="#555" stroke-width="1"/><circle cx="10.5" cy="7" r="1.6" fill="#5b7c88"/><path d="M8 13C8 9.5 13 9.5 13 13Z" fill="#5b7c88"/></svg>
<div class="t" style="top:211.20px;font-size:9.6px;line-height:9.6px;color:#2a2a2a;letter-spacing:-0.18px;left:70.3px;">Alignments</div>
<svg class="a" style="left:197px;top:212px;" width="14" height="9" viewBox="0 0 14 9"><path d="M0.9 4.5C3 0.2 11 0.2 13.1 4.5C11 8.8 3 8.8 0.9 4.5Z" fill="none" stroke="#111" stroke-width="1.5"/><circle cx="7" cy="4.5" r="2.7" fill="#111"/><path d="M6.3 3A1.6 1.6 0 1 0 8.2 5.4A1.4 1.4 0 0 1 6.3 3Z" fill="#e8e8e8"/></svg>
<svg class="a" style="left:35px;top:233.1px;" width="6" height="5" viewBox="0 0 6 5"><path d="M5 0.2V4.8H0.2Z" fill="#222"/></svg>
<svg class="a" style="left:54px;top:228.1px;" width="13" height="13" viewBox="0 0 13 13"><path d="M0.8 12.5V6A5.7 5.7 0 0 1 12.2 6V12.5H9.3V6.8A2.8 2.8 0 0 0 3.7 6.8V12.5Z" fill="#555"/><path d="M3.2 12.5V6.8A3.3 3.3 0 0 1 9.8 6.8V12.5" fill="none" stroke="#a8a8a8" stroke-width="0.8"/></svg>
<div class="t" style="top:229.80px;font-size:9.6px;line-height:9.6px;color:#2a2a2a;letter-spacing:-0.18px;left:70.3px;">New Tunnel 1</div>
<svg class="a" style="left:197px;top:230.6px;" width="14" height="9" viewBox="0 0 14 9"><path d="M0.9 4.5C3 0.2 11 0.2 13.1 4.5C11 8.8 3 8.8 0.9 4.5Z" fill="none" stroke="#111" stroke-width="1.5"/><circle cx="7" cy="4.5" r="2.7" fill="#111"/><path d="M6.3 3A1.6 1.6 0 1 0 8.2 5.4A1.4 1.4 0 0 1 6.3 3Z" fill="#e8e8e8"/></svg>
<svg class="a" style="left:55px;top:250.4px;" width="5" height="6" viewBox="0 0 5 6"><path d="M0.5 0.5L4.8 3L0.5 5.5Z" fill="#222"/></svg>
<svg class="a" style="left:75px;top:246.4px;" width="10" height="14" viewBox="0 0 10 14"><path d="M2 3.5L5 0.3L8 3.5Z" fill="#5b7c88"/><path d="M5 3.5V11" stroke="#666" stroke-width="1" stroke-dasharray="1.4 1"/><path d="M3.5 7.5H6.5" stroke="#666" stroke-width="0.8"/><path d="M1 12.5H9" stroke="#555" stroke-width="1.2"/></svg>
<div class="t" style="top:248.60px;font-size:9.6px;line-height:9.6px;color:#2a2a2a;letter-spacing:-0.18px;left:89.7px;">CL</div>
<svg class="a" style="left:197px;top:249.4px;" width="14" height="9" viewBox="0 0 14 9"><path d="M0.9 4.5C3 0.2 11 0.2 13.1 4.5C11 8.8 3 8.8 0.9 4.5Z" fill="none" stroke="#111" stroke-width="1.5"/><circle cx="7" cy="4.5" r="2.7" fill="#111"/><path d="M6.3 3A1.6 1.6 0 1 0 8.2 5.4A1.4 1.4 0 0 1 6.3 3Z" fill="#e8e8e8"/></svg>
<svg class="a" style="left:55px;top:269.2px;" width="5" height="6" viewBox="0 0 5 6"><path d="M0.5 0.5L4.8 3L0.5 5.5Z" fill="#222"/></svg>
<svg class="a" style="left:74px;top:265.7px;" width="13" height="13" viewBox="0 0 13 13"><path d="M1 12V6A5 5 0 0 1 11 6V12" fill="none" stroke="#555" stroke-width="1.1"/><path d="M1.5 11.5L8 3" stroke="#555" stroke-width="0.9"/><circle cx="8.5" cy="7" r="1.5" fill="#5b7c88"/><path d="M6 12.5C6 9.5 11 9.5 11 12.5Z" fill="#5b7c88"/></svg>
<div class="t" style="top:267.40px;font-size:9.6px;line-height:9.6px;color:#2a2a2a;letter-spacing:-0.18px;left:89.7px;">Tunnel Sections</div>
<svg class="a" style="left:197px;top:268.2px;" width="14" height="9" viewBox="0 0 14 9"><path d="M0.9 4.5C3 0.2 11 0.2 13.1 4.5C11 8.8 3 8.8 0.9 4.5Z" fill="none" stroke="#111" stroke-width="1.5"/><circle cx="7" cy="4.5" r="2.7" fill="#111"/><path d="M6.3 3A1.6 1.6 0 1 0 8.2 5.4A1.4 1.4 0 0 1 6.3 3Z" fill="#e8e8e8"/></svg>
<svg class="a" style="left:74.5px;top:284.5px;" width="12" height="13" viewBox="0 0 12 13"><path d="M1.2 12.2V5.8A4.8 4.8 0 0 1 10.8 5.8V12.2Z" fill="#dfe6e8" stroke="#555" stroke-width="1.3"/><path d="M3.4 12V6.4A2.6 2.6 0 0 1 8.6 6.4V12" fill="#eef2f3" stroke="#7d9aa4" stroke-width="1.2"/></svg>
<div class="t" style="top:286.20px;font-size:9.6px;line-height:9.6px;color:#2a2a2a;letter-spacing:-0.18px;left:89.7px;">Inner</div>
<svg class="a" style="left:197px;top:287px;" width="14" height="9" viewBox="0 0 14 9"><path d="M0.9 4.5C3 0.2 11 0.2 13.1 4.5C11 8.8 3 8.8 0.9 4.5Z" fill="none" stroke="#111" stroke-width="1.5"/><circle cx="7" cy="4.5" r="2.7" fill="#111"/><path d="M6.3 3A1.6 1.6 0 1 0 8.2 5.4A1.4 1.4 0 0 1 6.3 3Z" fill="#e8e8e8"/></svg>
<svg class="a" style="left:74.5px;top:303.3px;" width="12" height="13" viewBox="0 0 12 13"><path d="M1.2 12.2V5.8A4.8 4.8 0 0 1 10.8 5.8V12.2Z" fill="#dfe6e8" stroke="#555" stroke-width="1.3"/><path d="M3.4 12V6.4A2.6 2.6 0 0 1 8.6 6.4V12" fill="#eef2f3" stroke="#7d9aa4" stroke-width="1.2"/></svg>
<div class="t" style="top:305.00px;font-size:9.6px;line-height:9.6px;color:#2a2a2a;letter-spacing:-0.18px;left:89.7px;">Middle</div>
<svg class="a" style="left:197px;top:305.8px;" width="14" height="9" viewBox="0 0 14 9"><path d="M0.9 4.5C3 0.2 11 0.2 13.1 4.5C11 8.8 3 8.8 0.9 4.5Z" fill="none" stroke="#111" stroke-width="1.5"/><circle cx="7" cy="4.5" r="2.7" fill="#111"/><path d="M6.3 3A1.6 1.6 0 1 0 8.2 5.4A1.4 1.4 0 0 1 6.3 3Z" fill="#e8e8e8"/></svg>
<svg class="a" style="left:74.5px;top:322.1px;" width="12" height="13" viewBox="0 0 12 13"><path d="M1.2 12.2V5.8A4.8 4.8 0 0 1 10.8 5.8V12.2Z" fill="#dfe6e8" stroke="#555" stroke-width="1.3"/><path d="M3.4 12V6.4A2.6 2.6 0 0 1 8.6 6.4V12" fill="#eef2f3" stroke="#7d9aa4" stroke-width="1.2"/></svg>
<div class="t" style="top:323.80px;font-size:9.6px;line-height:9.6px;color:#2a2a2a;letter-spacing:-0.18px;left:89.7px;">Outer</div>
<svg class="a" style="left:197px;top:324.6px;" width="14" height="9" viewBox="0 0 14 9"><path d="M0.9 4.5C3 0.2 11 0.2 13.1 4.5C11 8.8 3 8.8 0.9 4.5Z" fill="none" stroke="#111" stroke-width="1.5"/><circle cx="7" cy="4.5" r="2.7" fill="#111"/><path d="M6.3 3A1.6 1.6 0 1 0 8.2 5.4A1.4 1.4 0 0 1 6.3 3Z" fill="#e8e8e8"/></svg>
<svg class="a" style="left:35px;top:407px;" width="12" height="14" viewBox="0 0 12 14"><path d="M0.5 0.5H8.5L11.5 3.5V13.5H0.5Z" fill="#b0202a"/><path d="M8.8 0.8L11.2 3.2" stroke="#f0f0f0" stroke-width="1"/><text x="1.3" y="9.2" font-size="3.6" fill="#f4d0d0" font-family="Liberation Sans" font-weight="bold">XML</text></svg>
<div class="t" style="top:409.20px;font-size:9.6px;line-height:9.6px;color:#2a2a2a;letter-spacing:-0.18px;left:50.8px;">CL Alignment.xml</div>
<svg class="a" style="left:197px;top:410px;" width="14" height="9" viewBox="0 0 14 9"><path d="M0.9 4.5C3 0.2 11 0.2 13.1 4.5C11 8.8 3 8.8 0.9 4.5Z" fill="none" stroke="#111" stroke-width="1.5"/><circle cx="7" cy="4.5" r="2.7" fill="#111"/><path d="M6.3 3A1.6 1.6 0 1 0 8.2 5.4A1.4 1.4 0 0 1 6.3 3Z" fill="#e8e8e8"/></svg>
<svg class="a" style="left:35px;top:426px;" width="12" height="14" viewBox="0 0 12 14"><path d="M0.5 0.5H8.5L11.5 3.5V13.5H0.5Z" fill="#eea020"/><path d="M8.8 0.8L11.2 3.2" stroke="#fff" stroke-width="1"/><text x="0.9" y="9.2" font-size="3.6" fill="#fff4d8" font-family="Liberation Sans" font-weight="bold">DWG</text></svg>
<div class="t" style="top:428.00px;font-size:9.6px;line-height:9.6px;color:#2a2a2a;letter-spacing:-0.18px;left:50.8px;">Tunnel Profile Section.dwg</div>
<svg class="a" style="left:197px;top:428.8px;" width="14" height="9" viewBox="0 0 14 9"><path d="M0.9 4.5C3 0.2 11 0.2 13.1 4.5C11 8.8 3 8.8 0.9 4.5Z" fill="none" stroke="#111" stroke-width="1.5"/><circle cx="7" cy="4.5" r="2.7" fill="#111"/><path d="M6.3 3A1.6 1.6 0 1 0 8.2 5.4A1.4 1.4 0 0 1 6.3 3Z" fill="#e8e8e8"/></svg>
<svg class="a" style="left:16px;top:627.7px;" width="5" height="6" viewBox="0 0 5 6"><path d="M0.5 0.5L4.8 3L0.5 5.5Z" fill="#222"/></svg>
<svg class="a" style="left:35px;top:624px;" width="13" height="13" viewBox="0 0 13 13"><rect x="0.5" y="0.5" width="12" height="2.8" fill="#5b7c88"/><rect x="1.3" y="4" width="10.4" height="8.5" fill="#5b7c88"/><rect x="4.5" y="5.5" width="4" height="1.3" fill="#dfe8ea"/></svg>
<div class="t" style="top:625.90px;font-size:9.6px;line-height:9.6px;color:#2a2a2a;letter-spacing:-0.18px;left:50.8px;">Exported Files</div>
<div class="a" style="left:220px;top:118px;width:4px;height:701px;background:#2f2f2f;"></div>
<div class="a" style="left:1276px;top:118px;width:4px;height:701px;background:#2f2f2f;"></div>
<div class="a" style="left:1495px;top:118px;width:5px;height:701px;background:#2f2f2f;"></div>
<div class="a" style="left:0px;top:114px;width:1500px;height:4px;background:#2f2f2f;"></div>
<div class="a" style="left:224px;top:118px;width:1052px;height:701px;background:#a3a3a3;"></div>
<div class="a" style="left:224px;top:118px;width:388px;height:22px;background:#5f7f8a;"></div>
<div class="a" style="left:612px;top:118px;width:3px;height:22px;background:#333;"></div>
<div class="a" style="left:615px;top:118px;width:661px;height:22px;background:linear-gradient(#8e8e8e,#7c7c7c);"></div>
<svg class="a" style="left:228px;top:122px;" width="16" height="15" viewBox="0 0 16 15"><path d="M6.5 9V2" stroke="#fff" stroke-width="1.2"/><path d="M4.5 3.3L6.5 0.5L8.5 3.3Z" fill="#fff"/><path d="M6.5 9H13" stroke="#fff" stroke-width="1.2"/><path d="M12 7L15 9L12 11Z" fill="#fff"/><path d="M6.5 9L2 13.5" stroke="#fff" stroke-width="1.2"/><path d="M1 11L1 14.5L4.2 14.2Z" fill="#fff"/></svg>
<div class="t" style="top:124.70px;font-size:10.2px;line-height:10.2px;color:#fff;letter-spacing:-0.04px;left:244.5px;">View</div>
<svg class="a" style="left:620px;top:123px;" width="14" height="15" viewBox="0 0 14 15"><path d="M3 1H9.5L12.5 4V13.5H3" fill="none" stroke="#eee" stroke-width="1.1"/><circle cx="6.2" cy="7.5" r="2.8" fill="none" stroke="#eee" stroke-width="1.2"/><path d="M4.2 9.5L1 12.8" stroke="#eee" stroke-width="1.4"/></svg>
<div class="t" style="top:124.70px;font-size:10.2px;line-height:10.2px;color:#fff;letter-spacing:-0.04px;left:636.6px;">Inspector</div>
<svg class="a" style="left:1265px;top:125.5px;" width="9" height="9" viewBox="0 0 9 9"><path d="M1.3 1.3L7.7 7.7M7.7 1.3L1.3 7.7" stroke="#fafafa" stroke-width="2.8" stroke-linecap="round"/><path d="M1.6 1.6L7.4 7.4M7.4 1.6L1.6 7.4" stroke="#333" stroke-width="0.8"/></svg>
<div class="a" style="left:227px;top:143px;width:1046px;height:646px;background:#1f1f1f;"></div>
<div class="a" style="left:228px;top:791px;width:1044px;height:23px;background:#3d3d3d;"></div>
<svg class="a" style="left:0;top:0" width="1500" height="844" viewBox="0 0 1500 844"><defs><clipPath id="vp"><rect x="227" y="143" width="1046" height="646"/></clipPath></defs><g clip-path="url(#vp)"><path d="M452.71 661.8 A303.9 303.9 0 1 1 992.69 661.8 L984.22 661.8" fill="none" stroke="#84de8c" stroke-width="1.35"/><path d="M452.71 661.8 L461.18 661.8" fill="none" stroke="#84de8c" stroke-width="1.35"/><path d="M461.18 661.8 A296.4 296.4 0 1 1 984.22 661.8 L934.9 661.8 A527.3 527.3 0 0 1 510 661.8 Z" fill="none" stroke="#f2ee00" stroke-width="1.35"/><path d="M459.06 610.6 A279.3 279.3 0 1 1 986.34 610.6 L918.5 610.6 L918.5 641.2 A421.1 421.1 0 0 1 526.7 641.2 L526.7 610.6 Z" fill="none" stroke="#f80000" stroke-width="1.35"/><path d="M418.5 465.7H1027.1" stroke="#d8d8d8" stroke-width="1.6" stroke-dasharray="8.5 2 1.6 2.7"/><circle cx="750" cy="465.7" r="1.3" fill="#fff"/><path d="M443.4 518.2H1001.6" stroke="#e00000" stroke-width="1.4" stroke-dasharray="9.5 2.5 1.5 2.5" stroke-dashoffset="3"/><path d="M427 522.4H1017" stroke="#1818e8" stroke-width="1.4" stroke-dasharray="9.5 2.5 1.5 2.5" stroke-dashoffset="6"/><path d="M722.7 160V732" stroke="#00d800" stroke-width="1.4" stroke-dasharray="8 2.6 1.6 2.6"/><path d="M719.4000000000001 522.3H726.0M722.7 519.0V525.5999999999999" stroke="#fff" stroke-width="1.5"/><path d="M719.4000000000001 628.5H726.0M722.7 625.2V631.8" stroke="#fff" stroke-width="1.5"/><rect x="980.2" y="658" width="8.5" height="8.3" fill="none" stroke="#80d890" stroke-width="1.3"/><path d="M285.4 726V694" stroke="#0000f0" stroke-width="2.4"/><path d="M281.8 697L285.4 689.5L289 697Z" fill="#0000f0"/><path d="M291 730.7H322" stroke="#f00000" stroke-width="2.4"/><path d="M320 727.2L327.5 730.7L320 734.2Z" fill="#f00000"/><rect x="280.5" y="725.8" width="10" height="10" fill="#fff" stroke="#000" stroke-width="1"/><text x="277.3" y="688" font-size="10" fill="#fff" font-family="Liberation Sans">N</text><text x="324.5" y="727.5" font-size="10" fill="#fff" font-family="Liberation Sans">E</text></g></svg>
<svg class="a" style="left:246px;top:796px;" width="14" height="14" viewBox="0 0 14 14"><circle cx="7" cy="7" r="6" fill="none" stroke="#ddd" stroke-width="1.1"/><circle cx="7" cy="7" r="3.5" fill="none" stroke="#ddd" stroke-width="0.9"/><path d="M2 5L6 8M8 3L7.5 11M5 12L12 6" stroke="#ddd" stroke-width="0.8"/></svg>
<svg class="a" style="left:268.1px;top:800.7px;" width="7" height="4" viewBox="0 0 7 4"><path d="M0 0H7L3.5 3.8Z" fill="#f0f0f0"/></svg>
<svg class="a" style="left:291px;top:795px;" width="15" height="15" viewBox="0 0 15 15"><path d="M1.5 6.5H7V13.5H1.5Z M1.5 6.5L7.5 1H13L7 6.5M13 1V8L7 13.5" fill="none" stroke="#ddd" stroke-width="1.1"/></svg>
<svg class="a" style="left:313.5px;top:800.7px;" width="7" height="4" viewBox="0 0 7 4"><path d="M0 0H7L3.5 3.8Z" fill="#f0f0f0"/></svg>
<svg class="a" style="left:337px;top:797px;" width="13" height="12" viewBox="0 0 13 12"><rect x="1" y="4" width="7" height="7" fill="none" stroke="#ddd" stroke-width="1"/><rect x="4" y="1" width="7" height="7" fill="none" stroke="#ddd" stroke-width="1"/><path d="M1 4L4 1M8 4L11 1M8 11L11 8" stroke="#ddd" stroke-width="0.8"/></svg>
<svg class="a" style="left:359.1px;top:800.7px;" width="7" height="4" viewBox="0 0 7 4"><path d="M0 0H7L3.5 3.8Z" fill="#f0f0f0"/></svg>
<svg class="a" style="left:381px;top:795px;" width="15" height="15" viewBox="0 0 15 15"><path d="M1 5H10V14H1Z" fill="#7ab8cc" stroke="#ddd" stroke-width="0.8"/><path d="M1 5L4.5 1H14L10 5ZM10 5L14 1V10L10 14Z" fill="#9ccfe0" stroke="#ddd" stroke-width="0.8"/></svg>
<svg class="a" style="left:404.1px;top:800.7px;" width="7" height="4" viewBox="0 0 7 4"><path d="M0 0H7L3.5 3.8Z" fill="#f0f0f0"/></svg>
<svg class="a" style="left:428px;top:796px;" width="13" height="13" viewBox="0 0 13 13"><path d="M3 1H12L6 12H3Z" fill="#ddd"/><path d="M1 1V12" stroke="#ddd" stroke-width="0.9" stroke-dasharray="1 1.3"/></svg>
<svg class="a" style="left:451.7px;top:800.7px;" width="7" height="4" viewBox="0 0 7 4"><path d="M0 0H7L3.5 3.8Z" fill="#f0f0f0"/></svg>
<svg class="a" style="left:472px;top:797px;" width="15" height="10" viewBox="0 0 15 10"><path d="M1.5 9C2 4 4.5 2.5 7.5 2.5C10.5 2.5 13 4 13.5 9Z" fill="#4a5560"/></svg>
<svg class="a" style="left:506px;top:796px;" width="13" height="13" viewBox="0 0 13 13"><rect x="0.6" y="0.6" width="11.8" height="11.8" fill="none" stroke="#e6e6e6" stroke-width="1.1"/><path d="M4.5 0.6V12.4M8.5 0.6V12.4M0.6 4.5H12.4M0.6 8.5H12.4" stroke="#e6e6e6" stroke-width="0.8"/><path d="M0.6 12.4L12.4 0.6" stroke="#e6e6e6" stroke-width="1.2"/></svg>
<svg class="a" style="left:1172px;top:796px;" width="13" height="13" viewBox="0 0 13 13"><path d="M3 3.5A4.8 4.8 0 1 1 2.2 8" fill="none" stroke="#eee" stroke-width="1.3"/><path d="M0.5 2L4.5 1.5L4 5.5Z" fill="#eee"/><circle cx="6.5" cy="7" r="1.3" fill="#eee"/></svg>
<svg class="a" style="left:1204px;top:796px;" width="13" height="13" viewBox="0 0 13 13"><rect x="0.7" y="0.7" width="11.6" height="11.6" fill="none" stroke="#eee" stroke-width="1.2"/><path d="M6.5 3.5V9.5M3.5 6.5H9.5" stroke="#eee" stroke-width="1.2"/></svg>
<svg class="a" style="left:1236px;top:795px;" width="16" height="16" viewBox="0 0 16 16"><circle cx="7" cy="7" r="5.5" fill="#47525a"/><path d="M9 14A5 5 0 0 0 14 9" stroke="#5a6670" stroke-width="1.3" fill="none"/><path d="M8 9A4 4 0 0 1 12 13" stroke="#5a6670" stroke-width="1.1" fill="none"/></svg>
<svg class="a" style="left:1264px;top:808px;" width="5" height="3" viewBox="0 0 5 3"><path d="M0 0H5L2.5 3Z" fill="#666"/></svg>
<div class="a" style="left:1280px;top:118px;width:215px;height:701px;background:#a3a3a3;"></div>
<div class="a" style="left:1283px;top:121px;width:209px;height:18px;background:#7f7f7f;"></div>
<svg class="a" style="left:1286px;top:123px;" width="14" height="14" viewBox="0 0 14 14"><rect x="0.7" y="0.7" width="12.6" height="12.6" rx="1" fill="none" stroke="#eee" stroke-width="1.1"/><path d="M3 4H11M3 7H11M3 10H11" stroke="#eee" stroke-width="1"/><path d="M4.5 2V12" stroke="#eee" stroke-width="0.8"/></svg>
<div class="t" style="top:126.60px;font-size:10.2px;line-height:10.2px;color:#f8f8f8;letter-spacing:-0.04px;left:1302px;">Property Grid</div>
<svg class="a" style="left:1479px;top:125.5px;" width="9" height="9" viewBox="0 0 9 9"><path d="M1.3 1.3L7.7 7.7M7.7 1.3L1.3 7.7" stroke="#fafafa" stroke-width="2.8" stroke-linecap="round"/><path d="M1.6 1.6L7.4 7.4M7.4 1.6L1.6 7.4" stroke="#333" stroke-width="0.8"/></svg>
<div class="a" style="left:1283.5px;top:146px;width:207.5px;height:17px;background:linear-gradient(#e4e4e4,#d8d8d8);border:1px solid #cfcfcf"></div>
<div class="a" style="left:1283.5px;top:163px;width:207.5px;height:2px;background:#8e8e8e;"></div>
<svg class="a" style="left:1293px;top:148px;" width="14" height="13" viewBox="0 0 14 13"><path d="M2.5 10.5L11 2.5" stroke="#777" stroke-width="1.1"/><circle cx="2.5" cy="10.5" r="1.8" fill="#888"/><circle cx="11" cy="2.5" r="1.8" fill="#888"/></svg>
<div class="t" style="top:151.20px;font-size:9.6px;line-height:9.6px;color:#2a2a2a;letter-spacing:-0.15px;left:1309.8px;">Line</div>
<svg class="a" style="left:1480.75px;top:153.25px;" width="6.5" height="3.5" viewBox="0 0 6.5 3.5"><path d="M0 0H6.5L3.25 3.5Z" fill="#111"/></svg>
<div class="a" style="left:1283.5px;top:168px;width:207.5px;height:18.6px;background:linear-gradient(#e2e2e2,#d6d6d6);border-top:1px solid #f0f0f0"></div>
<div class="a" style="left:1283.5px;top:185.6px;width:207.5px;height:1px;background:#c4c4cc;"></div>
<svg class="a" style="left:1291px;top:175px;" width="6" height="5" viewBox="0 0 6 5"><path d="M5 0V4.5H0.2Z" fill="#222"/></svg>
<div class="t" style="top:173.40px;font-size:10px;line-height:10px;color:#1e2430;letter-spacing:-0.5px;font-weight:bold;left:1303.3px;">Feature</div>
<div class="a" style="left:1283.5px;top:186.6px;width:97.5px;height:19.55px;background:#e8e8e8;"></div>
<div class="a" style="left:1382px;top:186.6px;width:109px;height:19.55px;background:#e8e8e8;"></div>
<div class="a" style="left:1381px;top:186.6px;width:1px;height:19.55px;background:#d2d2d2;"></div>
<div class="a" style="left:1283.5px;top:205.15px;width:207.5px;height:1px;background:#d6d6d6;"></div>
<div class="t" style="top:191.57px;font-size:9.6px;line-height:9.6px;color:#333;letter-spacing:-0.18px;left:1287px;">Date Time</div>
<div class="t" style="top:191.57px;font-size:9.6px;line-height:9.6px;color:#333;letter-spacing:0px;right:12.200000000000045px;">-</div>
<div class="a" style="left:1283.5px;top:206.15px;width:97.5px;height:19.55px;background:#e8e8e8;"></div>
<div class="a" style="left:1382px;top:206.15px;width:109px;height:19.55px;background:#e8e8e8;"></div>
<div class="a" style="left:1381px;top:206.15px;width:1px;height:19.55px;background:#d2d2d2;"></div>
<div class="a" style="left:1283.5px;top:224.70000000000002px;width:207.5px;height:1px;background:#d6d6d6;"></div>
<div class="t" style="top:211.12px;font-size:9.6px;line-height:9.6px;color:#333;letter-spacing:-0.18px;left:1287px;">Source</div>
<div class="t" style="top:211.12px;font-size:9.6px;line-height:9.6px;color:#333;letter-spacing:-0.18px;left:1386px;width:104px;overflow:hidden;">Tunnel Profile Section.dwg</div>
<div class="a" style="left:1283.5px;top:225.70000000000002px;width:97.5px;height:19.55px;background:#e8e8e8;"></div>
<div class="a" style="left:1382px;top:225.70000000000002px;width:109px;height:19.55px;background:#e8e8e8;"></div>
<div class="a" style="left:1381px;top:225.70000000000002px;width:1px;height:19.55px;background:#d2d2d2;"></div>
<div class="a" style="left:1283.5px;top:244.25000000000003px;width:207.5px;height:1px;background:#d6d6d6;"></div>
<div class="t" style="top:230.68px;font-size:9.6px;line-height:9.6px;color:#333;letter-spacing:-0.18px;left:1287px;">Shape</div>
<div class="t" style="top:230.68px;font-size:9.6px;line-height:9.6px;color:#333;letter-spacing:-0.18px;left:1386px;">Polyline</div>
<svg class="a" style="left:1478px;top:229.47500000000002px;" width="12" height="12" viewBox="0 0 12 12"><path d="M4.5 0.8H8.8L11 3V10.5H4.5Z" fill="#bdbdbd" stroke="#4a4a4a" stroke-width="1"/><path d="M1 2.5H5.5L7.5 4.5V11.5H1Z" fill="#d8d8d8" stroke="#4a4a4a" stroke-width="1"/></svg>
<div class="a" style="left:1283.5px;top:245.25000000000003px;width:97.5px;height:19.55px;background:#e8e8e8;"></div>
<div class="a" style="left:1382px;top:245.25000000000003px;width:109px;height:19.55px;background:#e8e8e8;"></div>
<div class="a" style="left:1382px;top:245.25000000000003px;width:76.20000000000005px;height:19.55px;background:#ffffff;"></div>
<div class="a" style="left:1381px;top:245.25000000000003px;width:1px;height:19.55px;background:#d2d2d2;"></div>
<div class="a" style="left:1283.5px;top:263.8px;width:207.5px;height:1px;background:#d6d6d6;"></div>
<div class="t" style="top:250.23px;font-size:9.6px;line-height:9.6px;color:#333;letter-spacing:-0.18px;left:1287px;">Layer</div>
<div class="a" style="left:1386.6px;top:251.52500000000003px;width:7px;height:7px;background:#1ee61e;"></div>
<div class="t" style="top:250.23px;font-size:9.6px;line-height:9.6px;color:#333;letter-spacing:-0.18px;left:1398px;">Outer</div>
<svg class="a" style="left:1448.0px;top:253.27500000000003px;" width="6" height="3.5" viewBox="0 0 6 3.5"><path d="M0 0H6L3.0 3.5Z" fill="#111"/></svg>
<svg class="a" style="left:1462px;top:249.02500000000003px;" width="8" height="12" viewBox="0 0 8 12"><path d="M4 0.8A3.2 3.2 0 0 1 7.2 4C7.2 5.8 5.5 6.5 5.3 8.5H2.7C2.5 6.5 0.8 5.8 0.8 4A3.2 3.2 0 0 1 4 0.8Z" fill="#f0a020" stroke="#333" stroke-width="0.7"/><path d="M2.8 9.5H5.2M3 10.8H5" stroke="#333" stroke-width="0.9"/></svg>
<svg class="a" style="left:1476px;top:249.02500000000003px;" width="14" height="12" viewBox="0 0 14 12"><path d="M1.5 7V3.5A2.5 2.5 0 0 1 6.5 3.5V5" fill="none" stroke="#222" stroke-width="1.2"/><rect x="5" y="5.5" width="7.5" height="6" fill="#fff" stroke="#222" stroke-width="1.1"/></svg>
<div class="a" style="left:1283.5px;top:264.8px;width:207.5px;height:2px;background:#8e8e8e;"></div>
<div class="a" style="left:1283.5px;top:269.7px;width:207.5px;height:18.6px;background:linear-gradient(#e2e2e2,#d6d6d6);border-top:1px solid #f0f0f0"></div>
<div class="a" style="left:1283.5px;top:287.3px;width:207.5px;height:1px;background:#c4c4cc;"></div>
<svg class="a" style="left:1291px;top:276.7px;" width="6" height="5" viewBox="0 0 6 5"><path d="M5 0V4.5H0.2Z" fill="#222"/></svg>
<div class="t" style="top:275.10px;font-size:10px;line-height:10px;color:#1e2430;letter-spacing:-0.5px;font-weight:bold;left:1303.3px;">Styling</div>
<div class="a" style="left:1283.5px;top:288.3px;width:97.5px;height:19.55px;background:#e8e8e8;"></div>
<div class="a" style="left:1382px;top:288.3px;width:109px;height:19.55px;background:#ffffff;"></div>
<div class="a" style="left:1381px;top:288.3px;width:1px;height:19.55px;background:#d2d2d2;"></div>
<div class="a" style="left:1283.5px;top:306.85px;width:207.5px;height:1px;background:#d6d6d6;"></div>
<div class="t" style="top:293.27px;font-size:9.6px;line-height:9.6px;color:#333;letter-spacing:-0.18px;left:1287px;">Line Colour</div>
<div class="a" style="left:1386.6px;top:294.575px;width:7px;height:7px;background:#1ee61e;"></div>
<div class="t" style="top:293.27px;font-size:9.6px;line-height:9.6px;color:#333;letter-spacing:-0.18px;left:1433px;">By Layer</div>
<svg class="a" style="left:1481.0px;top:296.325px;" width="6" height="3.5" viewBox="0 0 6 3.5"><path d="M0 0H6L3.0 3.5Z" fill="#111"/></svg>
<div class="a" style="left:1283.5px;top:307.85px;width:97.5px;height:19.55px;background:#e8e8e8;"></div>
<div class="a" style="left:1382px;top:307.85px;width:109px;height:19.55px;background:#ffffff;"></div>
<div class="a" style="left:1381px;top:307.85px;width:1px;height:19.55px;background:#d2d2d2;"></div>
<div class="a" style="left:1283.5px;top:326.40000000000003px;width:207.5px;height:1px;background:#d6d6d6;"></div>
<div class="t" style="top:312.82px;font-size:9.6px;line-height:9.6px;color:#333;letter-spacing:-0.18px;left:1287px;">Line Width</div>
<div class="t" style="top:312.82px;font-size:9.6px;line-height:9.6px;color:#333;letter-spacing:-0.18px;left:1386.6px;">0</div>
<div class="a" style="left:1415.5px;top:317.125px;width:12px;height:1.2px;background:#333;"></div>
<div class="t" style="top:312.82px;font-size:9.6px;line-height:9.6px;color:#333;letter-spacing:-0.18px;left:1433px;">By Layer</div>
<svg class="a" style="left:1481.0px;top:315.875px;" width="6" height="3.5" viewBox="0 0 6 3.5"><path d="M0 0H6L3.0 3.5Z" fill="#111"/></svg>
<div class="a" style="left:1283.5px;top:327.40000000000003px;width:97.5px;height:19.55px;background:#e8e8e8;"></div>
<div class="a" style="left:1382px;top:327.40000000000003px;width:109px;height:19.55px;background:#ffffff;"></div>
<div class="a" style="left:1381px;top:327.40000000000003px;width:1px;height:19.55px;background:#d2d2d2;"></div>
<div class="a" style="left:1283.5px;top:345.95000000000005px;width:207.5px;height:1px;background:#d6d6d6;"></div>
<div class="t" style="top:332.38px;font-size:9.6px;line-height:9.6px;color:#333;letter-spacing:-0.18px;left:1287px;">Line Style</div>
<div class="a" style="left:1390.3px;top:336.675px;width:86.5px;height:1.2px;background:#333;"></div>
<svg class="a" style="left:1481.0px;top:335.425px;" width="6" height="3.5" viewBox="0 0 6 3.5"><path d="M0 0H6L3.0 3.5Z" fill="#111"/></svg>
<div class="a" style="left:1283.5px;top:346.95000000000005px;width:207.5px;height:2px;background:#8e8e8e;"></div>
<div class="a" style="left:1283.5px;top:351.85px;width:207.5px;height:18.6px;background:linear-gradient(#e2e2e2,#d6d6d6);border-top:1px solid #f0f0f0"></div>
<div class="a" style="left:1283.5px;top:369.45000000000005px;width:207.5px;height:1px;background:#c4c4cc;"></div>
<svg class="a" style="left:1291px;top:358.85px;" width="6" height="5" viewBox="0 0 6 5"><path d="M5 0V4.5H0.2Z" fill="#222"/></svg>
<div class="t" style="top:357.25px;font-size:10px;line-height:10px;color:#1e2430;letter-spacing:-0.5px;font-weight:bold;left:1303.3px;">Details</div>
<div class="a" style="left:1283.5px;top:370.45000000000005px;width:97.5px;height:19.55px;background:#e8e8e8;"></div>
<div class="a" style="left:1382px;top:370.45000000000005px;width:109px;height:19.55px;background:#e8e8e8;"></div>
<div class="a" style="left:1381px;top:370.45000000000005px;width:1px;height:19.55px;background:#d2d2d2;"></div>
<div class="a" style="left:1283.5px;top:389.00000000000006px;width:207.5px;height:1px;background:#d6d6d6;"></div>
<div class="t" style="top:375.43px;font-size:9.6px;line-height:9.6px;color:#333;letter-spacing:-0.18px;left:1287px;">Closed</div>
<div class="t" style="top:375.43px;font-size:9.6px;line-height:9.6px;color:#333;letter-spacing:-0.18px;left:1386px;">No</div>
<div class="a" style="left:1283.5px;top:390.00000000000006px;width:97.5px;height:19.55px;background:#e8e8e8;"></div>
<div class="a" style="left:1382px;top:390.00000000000006px;width:109px;height:19.55px;background:#e8e8e8;"></div>
<div class="a" style="left:1381px;top:390.00000000000006px;width:1px;height:19.55px;background:#d2d2d2;"></div>
<div class="a" style="left:1283.5px;top:408.55000000000007px;width:207.5px;height:1px;background:#d6d6d6;"></div>
<div class="t" style="top:394.98px;font-size:9.6px;line-height:9.6px;color:#333;letter-spacing:-0.18px;left:1287px;">Points</div>
<div class="t" style="top:394.98px;font-size:9.6px;line-height:9.6px;color:#333;letter-spacing:-0.18px;right:10.5px;">5</div>
<div class="a" style="left:1283.5px;top:409.55000000000007px;width:97.5px;height:19.55px;background:#e8e8e8;"></div>
<div class="a" style="left:1382px;top:409.55000000000007px;width:109px;height:19.55px;background:#e8e8e8;"></div>
<div class="a" style="left:1381px;top:409.55000000000007px;width:1px;height:19.55px;background:#d2d2d2;"></div>
<div class="a" style="left:1283.5px;top:428.1000000000001px;width:207.5px;height:1px;background:#d6d6d6;"></div>
<div class="t" style="top:414.53px;font-size:9.6px;line-height:9.6px;color:#333;letter-spacing:-0.18px;left:1287px;">Max. Height</div>
<div class="t" style="top:414.53px;font-size:9.6px;line-height:9.6px;color:#333;letter-spacing:-0.18px;right:22.5px;">0.0000</div>
<div class="t" style="top:414.53px;font-size:9.6px;line-height:9.6px;color:#333;letter-spacing:-0.18px;left:1482px;">m</div>
<div class="a" style="left:1283.5px;top:429.1000000000001px;width:97.5px;height:19.55px;background:#e8e8e8;"></div>
<div class="a" style="left:1382px;top:429.1000000000001px;width:109px;height:19.55px;background:#e8e8e8;"></div>
<div class="a" style="left:1381px;top:429.1000000000001px;width:1px;height:19.55px;background:#d2d2d2;"></div>
<div class="a" style="left:1283.5px;top:447.6500000000001px;width:207.5px;height:1px;background:#d6d6d6;"></div>
<div class="t" style="top:434.08px;font-size:9.6px;line-height:9.6px;color:#333;letter-spacing:-0.18px;left:1287px;">Min. Height</div>
<div class="t" style="top:434.08px;font-size:9.6px;line-height:9.6px;color:#333;letter-spacing:-0.18px;right:22.5px;">0.0000</div>
<div class="t" style="top:434.08px;font-size:9.6px;line-height:9.6px;color:#333;letter-spacing:-0.18px;left:1482px;">m</div>
<div class="a" style="left:1283.5px;top:448.6500000000001px;width:97.5px;height:19.55px;background:#e8e8e8;"></div>
<div class="a" style="left:1382px;top:448.6500000000001px;width:109px;height:19.55px;background:#e8e8e8;"></div>
<div class="a" style="left:1381px;top:448.6500000000001px;width:1px;height:19.55px;background:#d2d2d2;"></div>
<div class="a" style="left:1283.5px;top:467.2000000000001px;width:207.5px;height:1px;background:#d6d6d6;"></div>
<div class="t" style="top:453.63px;font-size:9.6px;line-height:9.6px;color:#333;letter-spacing:-0.18px;left:1287px;">Length 2D</div>
<div class="t" style="top:453.63px;font-size:9.6px;line-height:9.6px;color:#333;letter-spacing:-0.18px;right:22.5px;">28.9833</div>
<div class="t" style="top:453.63px;font-size:9.6px;line-height:9.6px;color:#333;letter-spacing:-0.18px;left:1482px;">m</div>
<div class="a" style="left:1283.5px;top:468.2000000000001px;width:97.5px;height:19.55px;background:#e8e8e8;"></div>
<div class="a" style="left:1382px;top:468.2000000000001px;width:109px;height:19.55px;background:#e8e8e8;"></div>
<div class="a" style="left:1381px;top:468.2000000000001px;width:1px;height:19.55px;background:#d2d2d2;"></div>
<div class="a" style="left:1283.5px;top:486.7500000000001px;width:207.5px;height:1px;background:#d6d6d6;"></div>
<div class="t" style="top:473.18px;font-size:9.6px;line-height:9.6px;color:#333;letter-spacing:-0.18px;left:1287px;">Length 3D</div>
<div class="t" style="top:473.18px;font-size:9.6px;line-height:9.6px;color:#333;letter-spacing:-0.18px;right:22.5px;">28.9833</div>
<div class="t" style="top:473.18px;font-size:9.6px;line-height:9.6px;color:#333;letter-spacing:-0.18px;left:1482px;">m</div>
<div class="a" style="left:1283.5px;top:487.75000000000006px;width:207.5px;height:2px;background:#8e8e8e;"></div>
<div class="a" style="left:1283.5px;top:492.65000000000003px;width:207.5px;height:18.6px;background:linear-gradient(#e2e2e2,#d6d6d6);border-top:1px solid #f0f0f0"></div>
<div class="a" style="left:1283.5px;top:510.25000000000006px;width:207.5px;height:1px;background:#c4c4cc;"></div>
<svg class="a" style="left:1291px;top:499.65000000000003px;" width="6" height="5" viewBox="0 0 6 5"><path d="M5 0V4.5H0.2Z" fill="#222"/></svg>
<div class="t" style="top:498.05px;font-size:10px;line-height:10px;color:#1e2430;letter-spacing:-0.5px;font-weight:bold;left:1303.3px;">Points</div>
<div class="a" style="left:1283.5px;top:511.25000000000006px;width:97.5px;height:19.55px;background:#e8e8e8;"></div>
<div class="a" style="left:1382px;top:511.25000000000006px;width:109px;height:19.55px;background:#e8e8e8;"></div>
<div class="a" style="left:1382px;top:511.25000000000006px;width:84.20000000000005px;height:19.55px;background:#ffffff;"></div>
<div class="a" style="left:1381px;top:511.25000000000006px;width:1px;height:19.55px;background:#d2d2d2;"></div>
<div class="a" style="left:1283.5px;top:529.8000000000001px;width:207.5px;height:1px;background:#d6d6d6;"></div>
<div class="t" style="top:516.23px;font-size:9.6px;line-height:9.6px;color:#333;letter-spacing:-0.18px;left:1287px;">Point</div>
<div class="t" style="top:516.23px;font-size:9.6px;line-height:9.6px;color:#333;letter-spacing:-0.18px;left:1386px;">-</div>
<svg class="a" style="left:1456.0px;top:519.2750000000001px;" width="6" height="3.5" viewBox="0 0 6 3.5"><path d="M0 0H6L3.0 3.5Z" fill="#111"/></svg>
<svg class="a" style="left:1473px;top:515.0250000000001px;" width="12" height="12" viewBox="0 0 12 12"><circle cx="6" cy="6" r="4.8" fill="#f2c8cc" stroke="#e2a2a8" stroke-width="1"/><path d="M3.5 7A2.8 2.8 0 0 1 8.5 5" fill="none" stroke="#fff" stroke-width="1"/></svg>
<div class="a" style="left:1283.5px;top:530.8000000000001px;width:97.5px;height:19.55px;background:#e8e8e8;"></div>
<div class="a" style="left:1382px;top:530.8000000000001px;width:109px;height:19.55px;background:#e8e8e8;"></div>
<div class="a" style="left:1381px;top:530.8000000000001px;width:1px;height:19.55px;background:#d2d2d2;"></div>
<div class="a" style="left:1283.5px;top:549.35px;width:207.5px;height:1px;background:#d6d6d6;"></div>
<div class="t" style="top:535.78px;font-size:9.6px;line-height:9.6px;color:#333;letter-spacing:-0.18px;left:1287px;">Point Role</div>
<div class="t" style="top:535.78px;font-size:9.6px;line-height:9.6px;color:#333;letter-spacing:-0.18px;left:1386px;">-</div>
<div class="a" style="left:1283.5px;top:550.35px;width:97.5px;height:19.55px;background:#e8e8e8;"></div>
<div class="a" style="left:1382px;top:550.35px;width:109px;height:19.55px;background:#e8e8e8;"></div>
<div class="a" style="left:1381px;top:550.35px;width:1px;height:19.55px;background:#d2d2d2;"></div>
<div class="a" style="left:1283.5px;top:568.9px;width:207.5px;height:1px;background:#d6d6d6;"></div>
<div class="t" style="top:555.33px;font-size:9.6px;line-height:9.6px;color:#333;letter-spacing:-0.18px;left:1287px;">Code</div>
<div class="t" style="top:555.33px;font-size:9.6px;line-height:9.6px;color:#333;letter-spacing:-0.18px;left:1386px;">-</div>
<div class="a" style="left:1283.5px;top:569.9px;width:97.5px;height:19.55px;background:#e8e8e8;"></div>
<div class="a" style="left:1382px;top:569.9px;width:109px;height:19.55px;background:#e8e8e8;"></div>
<div class="a" style="left:1381px;top:569.9px;width:1px;height:19.55px;background:#d2d2d2;"></div>
<div class="a" style="left:1283.5px;top:588.4499999999999px;width:207.5px;height:1px;background:#d6d6d6;"></div>
<div class="t" style="top:574.88px;font-size:9.6px;line-height:9.6px;color:#333;letter-spacing:-0.18px;left:1287px;">Linework</div>
<div class="t" style="top:574.88px;font-size:9.6px;line-height:9.6px;color:#333;letter-spacing:-0.18px;left:1386px;">Begin line</div>
<div class="a" style="left:1283.5px;top:589.4499999999999px;width:97.5px;height:19.55px;background:#e8e8e8;"></div>
<div class="a" style="left:1382px;top:589.4499999999999px;width:109px;height:19.55px;background:#e8e8e8;"></div>
<div class="a" style="left:1381px;top:589.4499999999999px;width:1px;height:19.55px;background:#d2d2d2;"></div>
<div class="a" style="left:1283.5px;top:607.9999999999999px;width:207.5px;height:1px;background:#d6d6d6;"></div>
<div class="t" style="top:594.42px;font-size:9.6px;line-height:9.6px;color:#333;letter-spacing:-0.18px;left:1287px;">Easting</div>
<div class="t" style="top:594.42px;font-size:9.6px;line-height:9.6px;color:#333;letter-spacing:-0.18px;right:22.5px;">6.0000</div>
<div class="t" style="top:594.42px;font-size:9.6px;line-height:9.6px;color:#333;letter-spacing:-0.18px;left:1482px;">m</div>
<div class="a" style="left:1283.5px;top:608.9999999999999px;width:97.5px;height:19.55px;background:#e8e8e8;"></div>
<div class="a" style="left:1382px;top:608.9999999999999px;width:109px;height:19.55px;background:#e8e8e8;"></div>
<div class="a" style="left:1381px;top:608.9999999999999px;width:1px;height:19.55px;background:#d2d2d2;"></div>
<div class="a" style="left:1283.5px;top:627.5499999999998px;width:207.5px;height:1px;background:#d6d6d6;"></div>
<div class="t" style="top:613.97px;font-size:9.6px;line-height:9.6px;color:#333;letter-spacing:-0.18px;left:1287px;">Northing</div>
<div class="t" style="top:613.97px;font-size:9.6px;line-height:9.6px;color:#333;letter-spacing:-0.18px;right:22.5px;">-0.7789</div>
<div class="t" style="top:613.97px;font-size:9.6px;line-height:9.6px;color:#333;letter-spacing:-0.18px;left:1482px;">m</div>
<div class="a" style="left:1283.5px;top:628.5499999999998px;width:97.5px;height:19.55px;background:#e8e8e8;"></div>
<div class="a" style="left:1382px;top:628.5499999999998px;width:109px;height:19.55px;background:#e8e8e8;"></div>
<div class="a" style="left:1381px;top:628.5499999999998px;width:1px;height:19.55px;background:#d2d2d2;"></div>
<div class="a" style="left:1283.5px;top:647.0999999999998px;width:207.5px;height:1px;background:#d6d6d6;"></div>
<div class="t" style="top:633.52px;font-size:9.6px;line-height:9.6px;color:#333;letter-spacing:-0.18px;left:1287px;">Ortho. Height</div>
<div class="t" style="top:633.52px;font-size:9.6px;line-height:9.6px;color:#333;letter-spacing:-0.18px;right:22.5px;">0.0000</div>
<div class="t" style="top:633.52px;font-size:9.6px;line-height:9.6px;color:#333;letter-spacing:-0.18px;left:1482px;">m</div>
<div class="a" style="left:1283.5px;top:648.0999999999998px;width:97.5px;height:19.55px;background:#e8e8e8;"></div>
<div class="a" style="left:1382px;top:648.0999999999998px;width:109px;height:19.55px;background:#e8e8e8;"></div>
<div class="a" style="left:1381px;top:648.0999999999998px;width:1px;height:19.55px;background:#d2d2d2;"></div>
<div class="a" style="left:1283.5px;top:666.6499999999997px;width:207.5px;height:1px;background:#d6d6d6;"></div>
<div class="t" style="top:653.07px;font-size:9.6px;line-height:9.6px;color:#333;letter-spacing:-0.18px;left:1287px;">Ellip. Height</div>
<div class="t" style="top:653.07px;font-size:9.6px;line-height:9.6px;color:#333;letter-spacing:-0.18px;right:22.5px;">-</div>
<div class="t" style="top:653.07px;font-size:9.6px;line-height:9.6px;color:#333;letter-spacing:-0.18px;left:1482px;">m</div>
<div class="a" style="left:1283.5px;top:667.6499999999997px;width:97.5px;height:19.55px;background:#e8e8e8;"></div>
<div class="a" style="left:1382px;top:667.6499999999997px;width:109px;height:19.55px;background:#e8e8e8;"></div>
<div class="a" style="left:1381px;top:667.6499999999997px;width:1px;height:19.55px;background:#d2d2d2;"></div>
<div class="a" style="left:1283.5px;top:686.1999999999997px;width:207.5px;height:1px;background:#d6d6d6;"></div>
<div class="t" style="top:672.62px;font-size:9.6px;line-height:9.6px;color:#333;letter-spacing:-0.18px;left:1287px;">Geoid Separation</div>
<div class="t" style="top:672.62px;font-size:9.6px;line-height:9.6px;color:#333;letter-spacing:-0.18px;right:22.5px;">-</div>
<div class="t" style="top:672.62px;font-size:9.6px;line-height:9.6px;color:#333;letter-spacing:-0.18px;left:1482px;">m</div>
<div class="a" style="left:1283.5px;top:687.2px;width:207.5px;height:2px;background:#8e8e8e;"></div>
<div class="a" style="left:1348.5px;top:797.7px;width:67px;height:17.7px;background:linear-gradient(#e2e2e2,#d8d8d8);border:1px solid #8a8a8a"></div>
<div class="t" style="top:802.20px;font-size:9.6px;line-height:9.6px;color:#333;letter-spacing:-0.15px;left:1232px;width:300px;text-align:center;">Cancel</div>
<div class="a" style="left:1422px;top:797.7px;width:66.5px;height:17.7px;background:linear-gradient(#e2e2e2,#d8d8d8);border:1px solid #8a8a8a"></div>
<div class="t" style="top:802.20px;font-size:9.6px;line-height:9.6px;color:#333;letter-spacing:-0.15px;left:1305.5px;width:300px;text-align:center;">Apply</div>
<div class="a" style="left:0px;top:819px;width:1500px;height:25px;background:#3f3f3f;"></div>
<div class="a" style="left:0px;top:842px;width:1500px;height:2px;background:#4a4a4a;"></div>
<svg class="a" style="left:7px;top:825px;" width="14" height="14" viewBox="0 0 14 14"><rect x="0.5" y="0.5" width="12.5" height="12.5" rx="1" fill="#c8c8c8"/><path d="M3 10L6 7L7.5 8.5L11 3.5" stroke="#f4f4f4" stroke-width="1.1" fill="none"/></svg>
<svg class="a" style="left:24px;top:825px;" width="14" height="14" viewBox="0 0 14 14"><rect x="0.5" y="0.5" width="12.5" height="12.5" rx="1" fill="#c8c8c8"/><path d="M2.5 10L5 5.5L7 8L9 4.5L11 10" stroke="#666" stroke-width="1" fill="none"/></svg>
<div class="t" style="top:827.50px;font-size:10px;line-height:10px;color:#f4f4f4;letter-spacing:-0.347px;left:40.0px;">1 item selected</div>
<div class="a" style="left:1170.7px;top:824px;width:17.5px;height:16px;background:#6e6e6e;"></div>
<div class="a" style="left:1191px;top:824px;width:17.5px;height:16px;background:#6e6e6e;"></div>
<div class="a" style="left:1211px;top:824px;width:17.5px;height:16px;background:#6e6e6e;"></div>
<svg class="a" style="left:1173px;top:826px;" width="12" height="12" viewBox="0 0 12 12"><circle cx="6" cy="6" r="5" fill="none" stroke="#eee" stroke-width="1.2"/><path d="M3.5 3.5L8.5 8.5M4 8L8 4" stroke="#eee" stroke-width="1"/></svg>
<svg class="a" style="left:1193px;top:825px;" width="13" height="14" viewBox="0 0 13 14"><path d="M3 1H9L12 4V13H3" fill="none" stroke="#eee" stroke-width="1"/><circle cx="6.5" cy="7.5" r="2.6" fill="none" stroke="#eee" stroke-width="1.1"/><path d="M4.5 9.5L1.2 12.8" stroke="#eee" stroke-width="1.3"/></svg>
<svg class="a" style="left:1213px;top:826px;" width="13" height="12" viewBox="0 0 13 12"><rect x="0.6" y="0.6" width="11.8" height="10.8" fill="none" stroke="#eee" stroke-width="1"/><path d="M2.5 3.5H10.5M2.5 6H10.5M2.5 8.5H10.5" stroke="#eee" stroke-width="0.9"/></svg>
<svg class="a" style="left:1233px;top:825px;" width="14" height="14" viewBox="0 0 14 14"><path d="M2 4L7 1.5L12.5 3.5L7 6ZM2 7.5L7 5L12.5 7L7 9.5ZM2 11L7 8.5L12.5 10.5L7 13Z" fill="none" stroke="#eee" stroke-width="0.9"/></svg>
<svg class="a" style="left:1254px;top:825px;" width="14" height="14" viewBox="0 0 14 14"><rect x="1" y="1" width="6" height="12" fill="none" stroke="#eee" stroke-width="1.1"/><path d="M3 3.5H5M3 6H5M3 8.5H5" stroke="#eee" stroke-width="0.9"/><rect x="7.5" y="6" width="5" height="7" fill="#eee"/></svg>
<svg class="a" style="left:1274px;top:825px;" width="14" height="14" viewBox="0 0 14 14"><rect x="1" y="5.5" width="12" height="7.5" fill="#eee"/><path d="M1 4.5L12 1.5L12.5 3.5L1.5 6.5Z" fill="#eee"/><path d="M3.5 3.8L5 5.8M7 2.8L8.5 4.8" stroke="#3f3f3f" stroke-width="0.9"/><path d="M3 8H11M3 10.5H11" stroke="#3f3f3f" stroke-width="0.8"/></svg>
<svg class="a" style="left:1301px;top:825px;" width="15" height="15" viewBox="0 0 15 15"><path d="M2.5 12.5L12.5 2.5" stroke="#ddd" stroke-width="1" stroke-dasharray="1.5 1"/><circle cx="2.5" cy="12.5" r="1.6" fill="none" stroke="#ddd" stroke-width="1"/><circle cx="12.5" cy="2.5" r="1.6" fill="none" stroke="#ddd" stroke-width="1"/></svg>
<div class="t" style="top:827.50px;font-size:10px;line-height:10px;color:#f4f4f4;letter-spacing:-0.14px;left:1317.7px;">Meter</div>
<svg class="a" style="left:1350.8px;top:830.2px;" width="7" height="4" viewBox="0 0 7 4"><path d="M0 0H7L3.5 3.8Z" fill="#f0f0f0"/></svg>
<svg class="a" style="left:1372px;top:825px;" width="15" height="15" viewBox="0 0 15 15"><path d="M2.5 1.5V13.5L12.5 3" stroke="#ddd" stroke-width="1" fill="none"/><circle cx="2.5" cy="13" r="1.5" fill="none" stroke="#ddd" stroke-width="0.9"/><circle cx="12.5" cy="2.8" r="1.5" fill="none" stroke="#ddd" stroke-width="0.9"/><path d="M2.5 8Q5 7.5 6 9" stroke="#ddd" stroke-width="0.8" fill="none"/></svg>
<div class="t" style="top:827.50px;font-size:10px;line-height:10px;color:#f4f4f4;letter-spacing:-0.733px;left:1389.0px;">Gons</div>
<svg class="a" style="left:1418.2px;top:830.2px;" width="7" height="4" viewBox="0 0 7 4"><path d="M0 0H7L3.5 3.8Z" fill="#f0f0f0"/></svg>
<svg class="a" style="left:1439px;top:824px;" width="16" height="16" viewBox="0 0 16 16"><path d="M0.5 5L7 1.5L14 4.5L7 8Z" fill="#ddd"/><circle cx="9" cy="11" r="3.8" fill="#3f3f3f" stroke="#ddd" stroke-width="1.2"/><path d="M7 11H11M9 9V13" stroke="#ddd" stroke-width="0.8"/></svg>
<div class="t" style="top:827.50px;font-size:10px;line-height:10px;color:#f4f4f4;letter-spacing:-0.303px;left:1456.0px;">None</div>
<svg class="a" style="left:1484.8px;top:830.2px;" width="7" height="4" viewBox="0 0 7 4"><path d="M0 0H7L3.5 3.8Z" fill="#f0f0f0"/></svg>
<svg class="a" style="left:1304px;top:189px;" width="12" height="18" viewBox="0 0 12 18"><path d="M1 1V14.5L4.3 11.3L6.6 16.5L8.8 15.5L6.6 10.5H11Z" fill="#fff" stroke="#111" stroke-width="1" stroke-linejoin="round"/></svg>
</body></html>
